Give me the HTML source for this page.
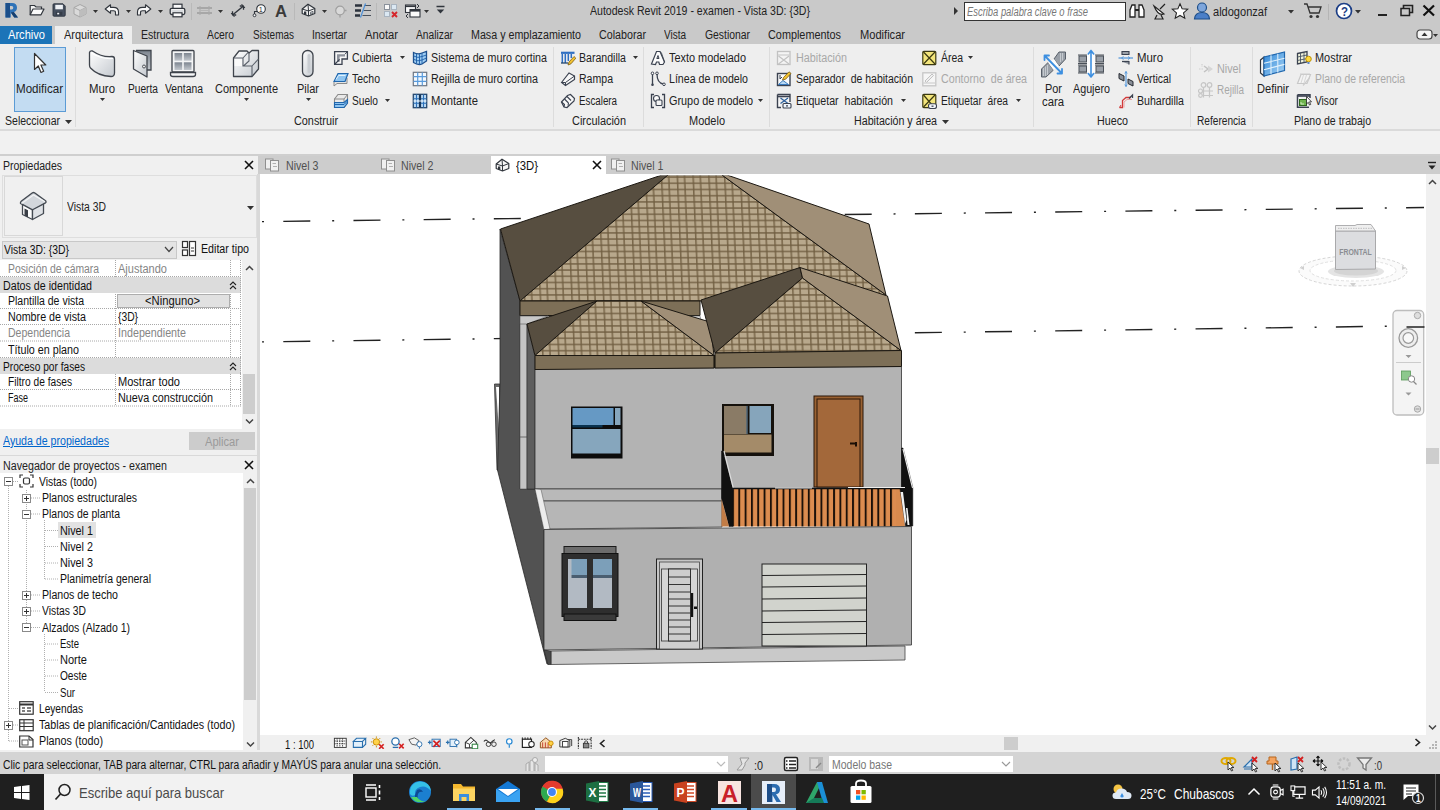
<!DOCTYPE html>
<html lang="es"><head><meta charset="utf-8"><title>Autodesk Revit 2019 - examen - Vista 3D: {3D}</title><style>
html,body{margin:0;padding:0}
body{width:1440px;height:810px;overflow:hidden;position:relative;background:#f0f0f0;font-family:"Liberation Sans",sans-serif;font-size:12px}
.t{position:absolute;white-space:pre;transform-origin:0 50%;display:block}
.r{position:absolute;box-sizing:border-box;display:block}
</style></head><body>
<div class="r" style="left:0px;top:0px;width:1440px;height:44px;background:#c9c9c9;"></div>
<div class="r" style="left:0px;top:44px;width:1440px;height:86px;background:#eeeeee;"></div>
<div class="r" style="left:0px;top:129px;width:1440px;height:2px;background:#dadada;"></div>
<div class="r" style="left:0px;top:131px;width:1440px;height:23px;background:#f1f1f1;"></div>
<div class="r" style="left:0px;top:154px;width:1440px;height:2px;background:#cfcfcf;"></div>
<span class="t" style="left:590px;top:3.6px;font-size:12px;line-height:14px;color:#222;transform:scaleX(0.8803);">Autodesk Revit 2019 - examen - Vista 3D: {3D}</span>
<div class="r" style="left:964px;top:2px;width:162px;height:19px;background:#fff;border:1px solid #333;"></div>
<span class="t" style="left:966.5px;top:4.6px;font-size:12px;line-height:14px;color:#777;transform:scaleX(0.7820);font-style:italic;">Escriba palabra clave o frase</span>
<span class="t" style="left:1213px;top:4.6px;font-size:12px;line-height:14px;color:#222;transform:scaleX(0.9197);">aldogonzaf</span>
<div class="r" style="left:0px;top:26px;width:52px;height:18px;background:#1c74b8;"></div>
<div class="r" style="left:55px;top:26px;width:77px;height:18px;background:#eeeeee;"></div>
<span class="t" style="left:8px;top:28.1px;font-size:12px;line-height:14px;color:#fff;transform:scaleX(0.9247);">Archivo</span>
<span class="t" style="left:64px;top:28.1px;font-size:12px;line-height:14px;color:#222;transform:scaleX(0.9120);">Arquitectura</span>
<span class="t" style="left:141px;top:28.1px;font-size:12px;line-height:14px;color:#222;transform:scaleX(0.8778);">Estructura</span>
<span class="t" style="left:207px;top:28.1px;font-size:12px;line-height:14px;color:#222;transform:scaleX(0.8613);">Acero</span>
<span class="t" style="left:253px;top:28.1px;font-size:12px;line-height:14px;color:#222;transform:scaleX(0.8309);">Sistemas</span>
<span class="t" style="left:312px;top:28.1px;font-size:12px;line-height:14px;color:#222;transform:scaleX(0.8604);">Insertar</span>
<span class="t" style="left:365px;top:28.1px;font-size:12px;line-height:14px;color:#222;transform:scaleX(0.9334);">Anotar</span>
<span class="t" style="left:416px;top:28.1px;font-size:12px;line-height:14px;color:#222;transform:scaleX(0.8535);">Analizar</span>
<span class="t" style="left:471px;top:28.1px;font-size:12px;line-height:14px;color:#222;transform:scaleX(0.8916);">Masa y emplazamiento</span>
<span class="t" style="left:599px;top:28.1px;font-size:12px;line-height:14px;color:#222;transform:scaleX(0.8920);">Colaborar</span>
<span class="t" style="left:664px;top:28.1px;font-size:12px;line-height:14px;color:#222;transform:scaleX(0.8314);">Vista</span>
<span class="t" style="left:705px;top:28.1px;font-size:12px;line-height:14px;color:#222;transform:scaleX(0.8650);">Gestionar</span>
<span class="t" style="left:768px;top:28.1px;font-size:12px;line-height:14px;color:#222;transform:scaleX(0.9046);">Complementos</span>
<span class="t" style="left:860px;top:28.1px;font-size:12px;line-height:14px;color:#222;transform:scaleX(0.9245);">Modificar</span>
<div class="r" style="left:13.5px;top:47px;width:52px;height:65px;background:#c3dcf2;border:1px solid #5b9bd5;"></div>
<span class="t" style="left:16px;top:81.6px;font-size:12px;line-height:14px;color:#222;transform:scaleX(0.9656);">Modificar</span>
<span class="t" style="left:89px;top:81.6px;font-size:12px;line-height:14px;color:#222;transform:scaleX(0.9511);">Muro</span>
<span class="t" style="left:128px;top:81.6px;font-size:12px;line-height:14px;color:#222;transform:scaleX(0.8486);">Puerta</span>
<span class="t" style="left:165px;top:81.6px;font-size:12px;line-height:14px;color:#222;transform:scaleX(0.8628);">Ventana</span>
<span class="t" style="left:215px;top:81.6px;font-size:12px;line-height:14px;color:#222;transform:scaleX(0.9169);">Componente</span>
<span class="t" style="left:297px;top:81.6px;font-size:12px;line-height:14px;color:#222;transform:scaleX(0.9165);">Pilar</span>
<span class="t" style="left:5px;top:114.1px;font-size:12px;line-height:14px;color:#222;transform:scaleX(0.8772);">Seleccionar</span>
<span class="t" style="left:294px;top:114.1px;font-size:12px;line-height:14px;color:#222;transform:scaleX(0.9039);">Construir</span>
<span class="t" style="left:572px;top:114.1px;font-size:12px;line-height:14px;color:#222;transform:scaleX(0.9098);">Circulación</span>
<span class="t" style="left:689px;top:114.1px;font-size:12px;line-height:14px;color:#222;transform:scaleX(0.9148);">Modelo</span>
<span class="t" style="left:854px;top:114.1px;font-size:12px;line-height:14px;color:#222;transform:scaleX(0.8888);">Habitación y área</span>
<span class="t" style="left:1097px;top:114.1px;font-size:12px;line-height:14px;color:#222;transform:scaleX(0.8937);">Hueco</span>
<span class="t" style="left:1197px;top:114.1px;font-size:12px;line-height:14px;color:#222;transform:scaleX(0.8444);">Referencia</span>
<span class="t" style="left:1294px;top:114.1px;font-size:12px;line-height:14px;color:#222;transform:scaleX(0.8811);">Plano de trabajo</span>
<span class="t" style="left:352px;top:50.6px;font-size:12px;line-height:14px;color:#222;transform:scaleX(0.8819);">Cubierta</span>
<span class="t" style="left:352px;top:72.1px;font-size:12px;line-height:14px;color:#222;transform:scaleX(0.8745);">Techo</span>
<span class="t" style="left:352px;top:93.6px;font-size:12px;line-height:14px;color:#222;transform:scaleX(0.8472);">Suelo</span>
<span class="t" style="left:431px;top:50.6px;font-size:12px;line-height:14px;color:#222;transform:scaleX(0.8920);">Sistema de muro cortina</span>
<span class="t" style="left:431px;top:72.1px;font-size:12px;line-height:14px;color:#222;transform:scaleX(0.8963);">Rejilla de muro cortina</span>
<span class="t" style="left:431px;top:93.6px;font-size:12px;line-height:14px;color:#222;transform:scaleX(0.9395);">Montante</span>
<span class="t" style="left:579px;top:50.6px;font-size:12px;line-height:14px;color:#222;transform:scaleX(0.8807);">Barandilla</span>
<span class="t" style="left:579px;top:72.1px;font-size:12px;line-height:14px;color:#222;transform:scaleX(0.8790);">Rampa</span>
<span class="t" style="left:579px;top:93.6px;font-size:12px;line-height:14px;color:#222;transform:scaleX(0.8140);">Escalera</span>
<span class="t" style="left:669px;top:50.6px;font-size:12px;line-height:14px;color:#222;transform:scaleX(0.9089);">Texto modelado</span>
<span class="t" style="left:669px;top:72.1px;font-size:12px;line-height:14px;color:#222;transform:scaleX(0.8837);">Línea de modelo</span>
<span class="t" style="left:669px;top:93.6px;font-size:12px;line-height:14px;color:#222;transform:scaleX(0.9060);">Grupo de modelo</span>
<span class="t" style="left:796px;top:72.1px;font-size:12px;line-height:14px;color:#222;transform:scaleX(0.8726);">Separador  de habitación</span>
<span class="t" style="left:796px;top:93.6px;font-size:12px;line-height:14px;color:#222;transform:scaleX(0.8867);">Etiquetar  habitación</span>
<span class="t" style="left:941px;top:50.6px;font-size:12px;line-height:14px;color:#222;transform:scaleX(0.8680);">Área</span>
<span class="t" style="left:941px;top:93.6px;font-size:12px;line-height:14px;color:#222;transform:scaleX(0.8512);">Etiquetar  área</span>
<span class="t" style="left:1137px;top:50.6px;font-size:12px;line-height:14px;color:#222;transform:scaleX(0.9511);">Muro</span>
<span class="t" style="left:1137px;top:72.1px;font-size:12px;line-height:14px;color:#222;transform:scaleX(0.8640);">Vertical</span>
<span class="t" style="left:1137px;top:93.6px;font-size:12px;line-height:14px;color:#222;transform:scaleX(0.8807);">Buhardilla</span>
<span class="t" style="left:1315px;top:50.6px;font-size:12px;line-height:14px;color:#222;transform:scaleX(0.9098);">Mostrar</span>
<span class="t" style="left:1315px;top:93.6px;font-size:12px;line-height:14px;color:#222;transform:scaleX(0.8480);">Visor</span>
<span class="t" style="left:796px;top:50.6px;font-size:12px;line-height:14px;color:#a8a8a8;transform:scaleX(0.8995);">Habitación</span>
<span class="t" style="left:941px;top:72.1px;font-size:12px;line-height:14px;color:#a8a8a8;transform:scaleX(0.8891);">Contorno  de área</span>
<span class="t" style="left:1217px;top:61.6px;font-size:12px;line-height:14px;color:#a8a8a8;transform:scaleX(0.8998);">Nivel</span>
<span class="t" style="left:1217px;top:83.1px;font-size:12px;line-height:14px;color:#a8a8a8;transform:scaleX(0.8263);">Rejilla</span>
<span class="t" style="left:1315px;top:72.1px;font-size:12px;line-height:14px;color:#a8a8a8;transform:scaleX(0.8649);">Plano de referencia</span>
<span class="t" style="left:1045px;top:81.6px;font-size:12px;line-height:14px;color:#222;transform:scaleX(0.9104);">Por</span>
<span class="t" style="left:1042px;top:94.6px;font-size:12px;line-height:14px;color:#222;transform:scaleX(0.9425);">cara</span>
<span class="t" style="left:1073px;top:81.6px;font-size:12px;line-height:14px;color:#222;transform:scaleX(0.8946);">Agujero</span>
<span class="t" style="left:1257px;top:81.6px;font-size:12px;line-height:14px;color:#222;transform:scaleX(0.9229);">Definir</span>
<div class="r" style="left:75px;top:47px;width:1px;height:80px;background:#dcdcdc;"></div>
<div class="r" style="left:553px;top:47px;width:1px;height:80px;background:#dcdcdc;"></div>
<div class="r" style="left:643px;top:47px;width:1px;height:80px;background:#dcdcdc;"></div>
<div class="r" style="left:769px;top:47px;width:1px;height:80px;background:#dcdcdc;"></div>
<div class="r" style="left:1033px;top:47px;width:1px;height:80px;background:#dcdcdc;"></div>
<div class="r" style="left:1190px;top:47px;width:1px;height:80px;background:#dcdcdc;"></div>
<div class="r" style="left:1252px;top:47px;width:1px;height:80px;background:#dcdcdc;"></div>
<svg class="r" style="left:399.5px;top:56.0px;" width="5" height="4" viewBox="0 0 5 4"><path d="M0 0 L5 0 L2.5 3 Z" fill="#333"/></svg>
<svg class="r" style="left:385.0px;top:99.0px;" width="5" height="4" viewBox="0 0 5 4"><path d="M0 0 L5 0 L2.5 3 Z" fill="#333"/></svg>
<svg class="r" style="left:633.0px;top:56.0px;" width="5" height="4" viewBox="0 0 5 4"><path d="M0 0 L5 0 L2.5 3 Z" fill="#333"/></svg>
<svg class="r" style="left:758.0px;top:99.0px;" width="5" height="4" viewBox="0 0 5 4"><path d="M0 0 L5 0 L2.5 3 Z" fill="#333"/></svg>
<svg class="r" style="left:901.0px;top:99.0px;" width="5" height="4" viewBox="0 0 5 4"><path d="M0 0 L5 0 L2.5 3 Z" fill="#333"/></svg>
<svg class="r" style="left:968.0px;top:56.0px;" width="5" height="4" viewBox="0 0 5 4"><path d="M0 0 L5 0 L2.5 3 Z" fill="#333"/></svg>
<svg class="r" style="left:1016.0px;top:99.0px;" width="5" height="4" viewBox="0 0 5 4"><path d="M0 0 L5 0 L2.5 3 Z" fill="#333"/></svg>
<svg class="r" style="left:64.5px;top:119.5px;" width="7" height="5" viewBox="0 0 7 5"><path d="M0 0 L7 0 L3.5 4 Z" fill="#333"/></svg>
<svg class="r" style="left:942.0px;top:119.5px;" width="7" height="5" viewBox="0 0 7 5"><path d="M0 0 L7 0 L3.5 4 Z" fill="#333"/></svg>
<svg class="r" style="left:99.5px;top:97.5px;" width="5" height="4" viewBox="0 0 5 4"><path d="M0 0 L5 0 L2.5 3 Z" fill="#333"/></svg>
<svg class="r" style="left:243.5px;top:97.5px;" width="5" height="4" viewBox="0 0 5 4"><path d="M0 0 L5 0 L2.5 3 Z" fill="#333"/></svg>
<svg class="r" style="left:305.5px;top:97.5px;" width="5" height="4" viewBox="0 0 5 4"><path d="M0 0 L5 0 L2.5 3 Z" fill="#333"/></svg>
<svg class="r" style="left:0px;top:0px;" width="1" height="1" viewBox="0 0 1 1"><defs><linearGradient id="gA" x1="0" y1="0" x2="1" y2="1"><stop offset="0" stop-color="#ffffff"/><stop offset="1" stop-color="#c4c9cf"/></linearGradient><linearGradient id="gB" x1="0" y1="0" x2="0" y2="1"><stop offset="0" stop-color="#7d8590"/><stop offset="1" stop-color="#c3c8ce"/></linearGradient><linearGradient id="gC" x1="0" y1="0" x2="1" y2="1"><stop offset="0" stop-color="#2f86d6"/><stop offset="1" stop-color="#a9d6f7"/></linearGradient></defs></svg>
<svg class="r" style="left:32px;top:52px;" width="16" height="24" viewBox="0 0 16 24"><path d="M2.500 1.500 L2.500 17.500 L6.300 14 L9 20.500 L11.700 19.300 L8.900 13 L13.800 13 Z" fill="#fff" stroke="#333" stroke-width="1.200" stroke-linejoin="round"/></svg>
<svg class="r" style="left:88px;top:49px;" width="28" height="29" viewBox="0 0 28 29"><path d="M1.500 3.500 Q2 1.500 4.500 2 Q14 8.500 24 7.500 Q26.500 7.500 26.500 10 V24 Q26.500 27.500 23 27.500 Q10 27 2.500 19 Q1.500 18 1.500 16 Z" fill="url(#gA)" stroke="#3f444c" stroke-width="1.300"/><path d="M3.500 4 Q14 10.500 25 9.500" fill="none" stroke="#fff" stroke-width="1.200"/></svg>
<svg class="r" style="left:132px;top:49px;" width="21" height="29" viewBox="0 0 21 29"><path d="M4 1.500 H19 V21 H15" fill="url(#gB)" stroke="#3f444c" stroke-width="1.300"/><path d="M1.500 1.500 L15 7 V28 L1.500 20 Z" fill="url(#gA)" stroke="#3f444c" stroke-width="1.300" stroke-linejoin="round"/><circle cx="12" cy="17.500" r="1.500" fill="#e8e8e8" stroke="#3f444c" stroke-width=".9"/></svg>
<svg class="r" style="left:169px;top:49px;" width="28" height="29" viewBox="0 0 28 29"><rect x="3" y="1.500" width="22" height="21.500" rx="1" fill="#f4f5f6" stroke="#3f444c" stroke-width="1.300"/><rect x="5.500" y="4" width="7.700" height="7.700" fill="url(#gB)"/><rect x="14.800" y="4" width="7.700" height="7.700" fill="url(#gB)"/><rect x="5.500" y="13.300" width="7.700" height="7.700" fill="url(#gB)"/><rect x="14.800" y="13.300" width="7.700" height="7.700" fill="url(#gB)"/><path d="M1.500 23.500 H26.500 V25.500 Q26.500 27.500 24 27.500 H4 Q1.500 27.500 1.500 25.500 Z" fill="#f4f5f6" stroke="#3f444c" stroke-width="1.300"/></svg>
<svg class="r" style="left:232px;top:49px;" width="28" height="29" viewBox="0 0 28 29"><path d="M1.500 9 L7 2 H15 L17 4 L20 1.500 H26.500 V20 L20 27.500 H1.500 Z" fill="url(#gA)" stroke="#3f444c" stroke-width="1.300" stroke-linejoin="round"/><path d="M1.500 9 H11 V17 H20 V27 M11 9 L16 3.500 M20 17 L26.500 10 M17 4 V12 L11.500 17" fill="none" stroke="#5a606a" stroke-width="1.100"/><rect x="2.700" y="10.200" width="7.300" height="6.800" fill="#fafafa"/></svg>
<svg class="r" style="left:301px;top:49px;" width="14" height="29" viewBox="0 0 14 29"><rect x="1.500" y="1.500" width="10.500" height="26" rx="5" fill="url(#gA)" stroke="#3f444c" stroke-width="1.300"/><rect x="6.500" y="5" width="3" height="19" rx="1.500" fill="#c9cdd2"/></svg>
<svg class="r" style="left:1040px;top:50px;" width="28" height="28" viewBox="0 0 28 28"><path d="M14 9 L19 2 H25.500 V9 L19 16 Z" fill="#9aa0a8" stroke="#59606a" stroke-width="1"/><path d="M1.500 19 L8 12.500 L13.500 20 L6 27 H1.500 Z" fill="#9aa0a8" stroke="#59606a" stroke-width="1"/><path d="M8 12.500 L14 9 L19 16 L13.500 20 Z" fill="#fdfdfd"/><path d="M20.500 3 V12 M22.500 3 V10.500 M3.500 18 V26 M5.500 16.500 V26 M7.500 15 V25" stroke="#d0d4d9" stroke-width=".8"/><path d="M4.500 5.500 L22 23.500 M4.500 5.500 H9 M4.500 5.500 V10 M22 23.500 H17.500 M22 23.500 V19" stroke="#3d8fe0" stroke-width="1.800" fill="none" stroke-linecap="round"/></svg>
<svg class="r" style="left:1076px;top:49px;" width="30" height="30" viewBox="0 0 30 30"><rect x="10" y="5" width="10" height="19" fill="#fdfdfd"/><g fill="#9aa0a8" stroke="#4a5059" stroke-width="1"><rect x="3" y="7" width="7.500" height="6"/><rect x="20" y="7" width="7.500" height="6"/><rect x="3" y="17" width="7.500" height="6"/><rect x="20" y="17" width="7.500" height="6"/></g><path d="M2 6 H11 M2 14.500 H11 M2 16 H11 M2 24 H11 M19 6 H28 M19 14.500 H28 M19 16 H28 M19 24 H28" stroke="#4a5059" stroke-width="1"/><path d="M15 1.500 V28 M15 1.500 L12.300 5 M15 1.500 L17.700 5 M15 28 L12.300 24.500 M15 28 L17.700 24.500" stroke="#3d8fe0" stroke-width="1.600" fill="none" stroke-linecap="round"/></svg>
<svg class="r" style="left:1259px;top:50px;" width="28" height="28" viewBox="0 0 28 28"><path d="M1.500 10 L5 7 V26 L1.500 23 Z" fill="#f4f4f4" stroke="#30353c" stroke-width="1.200"/><path d="M5 7 L25.500 2 V20.500 L5 26 Z" fill="url(#gC)" stroke="#1f66ad" stroke-width="1.200"/><path d="M12 5.300 V24.200 M18.800 3.700 V22.400 M5 13.300 L25.500 8.200 M5 19.700 L25.500 14.400" stroke="#dff0fc" stroke-width="1.100" fill="none"/></svg>
<svg class="r" style="left:333px;top:49.5px;" width="16" height="16" viewBox="0 0 16 16"><path d="M1.600 1.600 H14.400 V9 H9 V14.400 H1.600 Z" fill="#f6f6f6" stroke="#3b4250" stroke-width="1.300"/><path d="M4 4.200 H12 V6.600 H6.600 V12 H4 Z" fill="#8d929c"/><path d="M2 14 L6.600 9.400" stroke="#3b4250" stroke-width="1.200"/><path d="M12 4.200 L14.400 1.600" stroke="#3b4250" stroke-width="1"/></svg>
<svg class="r" style="left:333px;top:71px;" width="16" height="16" viewBox="0 0 16 16"><path d="M1 11 V15 L4 12.500 H14 V7" fill="#e4e4e4" stroke="#8a8a8a" stroke-width="1"/><path d="M1 10.500 L5 2.500 H15 L12 10.500 Z" fill="#8ec4f0" stroke="#1f66ad" stroke-width="1.200"/><path d="M3 8.500 L5.500 4.500 H12.500" stroke="#dff0fc" stroke-width="1" fill="none"/></svg>
<svg class="r" style="left:333px;top:92.5px;" width="16" height="16" viewBox="0 0 16 16"><path d="M1.500 6 L5 1.500 H14.500 V10 L11 14.500 H1.500 Z" fill="#e9e9e9" stroke="#8a8a8a" stroke-width="1.100"/><path d="M1.500 6 H11 V14.500 M11 6 L14.500 1.500" fill="none" stroke="#8a8a8a" stroke-width="1"/><path d="M1.500 9.500 H11 L14.500 6.500 V10 L11 14.500 H1.500 Z" fill="#8ec4f0" stroke="#1f66ad" stroke-width="1.100"/><path d="M1.500 11.500 H11 L14.500 8" fill="none" stroke="#1f66ad" stroke-width="1"/></svg>
<svg class="r" style="left:412px;top:49.5px;" width="16" height="16" viewBox="0 0 16 16"><path d="M1.500 2.500 Q6 5 10 3 L14.500 1.500 V11 L10 14 Q6 15.500 1.500 12.500 Z" fill="#9fcdf2" stroke="#1d4f8c" stroke-width="1.300"/><path d="M4.500 3.800 V13.700 M7.500 4.200 V14.500 M10 3 V14 M1.500 6 Q6 8.500 10 6.500 L14.500 5 M1.500 9.300 Q6 12 10 10 L14.500 8" stroke="#1d5fa8" stroke-width=".9" fill="none"/></svg>
<svg class="r" style="left:412px;top:71px;" width="16" height="16" viewBox="0 0 16 16"><rect x="1.300" y="1.300" width="13.400" height="13.400" fill="#f3f8fd" stroke="#6d7580" stroke-width="1.200"/><path d="M5.700 1.500 V14.500 M10.300 1.500 V14.500 M1.500 5.700 H14.500 M1.500 10.300 H14.500" stroke="#5a9bdc" stroke-width="1.200"/></svg>
<svg class="r" style="left:412px;top:92.5px;" width="16" height="16" viewBox="0 0 16 16"><rect x="1.300" y="1.300" width="13.400" height="13.400" fill="#b9d9f4" stroke="#26486e" stroke-width="1.300"/><path d="M1.500 5.700 H14.500 M1.500 10.300 H14.500 M4.500 1.500 V14.500 M11.500 1.500 V14.500" stroke="#2a6fb8" stroke-width="1.100"/><path d="M8 1.500 V14.500" stroke="#17365a" stroke-width="2.200"/><path d="M1.500 8 H14.500" stroke="#eaf4fc" stroke-width="1"/></svg>
<svg class="r" style="left:560px;top:49.5px;" width="16" height="16" viewBox="0 0 16 16"><path d="M1 2.800 H14.500" stroke="#2f6fc2" stroke-width="2.200"/><path d="M2.300 4 V13 M5.300 4 V13 M8.300 4 V11 M11.300 4 V8" stroke="#2f6fc2" stroke-width="1.500"/><path d="M1 13 H8" stroke="#26486e" stroke-width="1.300"/><path d="M8 15 L9 12 L14 6.500 L15.800 8.200 L11 13.800 Z" fill="#f2c230" stroke="#7a5a10" stroke-width=".8"/></svg>
<svg class="r" style="left:560px;top:71px;" width="16" height="16" viewBox="0 0 16 16"><path d="M1.500 11.500 L9 2 L14.500 5 V8.500 L5.500 14.500 Z" fill="#f8f8f8" stroke="#3b4250" stroke-width="1.200"/><path d="M14.500 5 L5.500 11.500 V14.500 M5.500 11.500 L1.500 11.500" fill="none" stroke="#3b4250" stroke-width="1"/></svg>
<svg class="r" style="left:560px;top:92.5px;" width="16" height="16" viewBox="0 0 16 16"><path d="M1.500 9 L7.500 2.500 L10.500 1.500 L14.500 5.500 L14 8 L7 14.500 L4 14 Z" fill="#f8f8f8" stroke="#3b4250" stroke-width="1.200"/><path d="M4.500 6 L8.500 10 M7 3.500 L11 7.500 M4 14 L4.500 11.500 L1.500 9 M8.500 10 L8 12.500" fill="none" stroke="#3b4250" stroke-width="1.100"/></svg>
<svg class="r" style="left:650px;top:49.5px;" width="16" height="16" viewBox="0 0 16 16"><path d="M1.500 14 L6.500 1.500 H10 L14.500 12 L13 14.500 H9.500 L8.800 12 H6.500 L5.500 14.500 Z" fill="#fbfbfb" stroke="#3b4250" stroke-width="1.200"/><path d="M6.800 8.500 H9 L8 5.500 Z" fill="#eee" stroke="#3b4250" stroke-width="1"/><path d="M10 1.500 L11.500 3 L14.500 12" fill="none" stroke="#3b4250" stroke-width=".8"/></svg>
<svg class="r" style="left:650px;top:71px;" width="16" height="16" viewBox="0 0 16 16"><path d="M2.500 3 V13" stroke="#3b4250" stroke-width="1.300"/><circle cx="2.500" cy="2.300" r="1.300" fill="#fff" stroke="#3b4250"/><circle cx="2.500" cy="13.700" r="1.300" fill="#3b4250"/><path d="M7 3 Q7 12 13.500 13" fill="none" stroke="#3b4250" stroke-width="1.300"/><circle cx="7" cy="2.300" r="1.300" fill="#fff" stroke="#3b4250"/><circle cx="14" cy="13.300" r="1.300" fill="#fff" stroke="#3b4250"/></svg>
<svg class="r" style="left:650px;top:92.5px;" width="16" height="16" viewBox="0 0 16 16"><path d="M4 1.500 H1.500 V14.500 H4 M12 1.500 H14.500 V14.500 H12" fill="none" stroke="#3b4250" stroke-width="1.300"/><circle cx="6.500" cy="5.500" r="3" fill="#fbfbfb" stroke="#3b4250" stroke-width="1.100"/><rect x="6" y="7" width="6" height="5.500" rx="1" fill="#f4f4f4" stroke="#3b4250" stroke-width="1.100"/></svg>
<svg class="r" style="left:776px;top:49.5px;" width="16" height="16" viewBox="0 0 16 16"><rect x="1.500" y="1.500" width="12.500" height="13" fill="#f4f4f4" stroke="#c2c2c2" stroke-width="1.300"/><path d="M2 5 H14" stroke="#cfcfcf" stroke-width="1.300"/><path d="M2.500 6 L13 14 M13 6 L2.500 14" stroke="#c2c2c2" stroke-width="1.200"/></svg>
<svg class="r" style="left:776px;top:71px;" width="16" height="16" viewBox="0 0 16 16"><rect x="1.500" y="2.500" width="12.500" height="12" fill="#fbfbfb" stroke="#3b4250" stroke-width="1.400"/><path d="M2.500 13.500 L7 9.500 L12.500 13.500 Z" fill="#b9d9f4" stroke="#2a6fb8" stroke-width=".9"/><path d="M4 4 V8 L6 6" fill="none" stroke="#3b4250" stroke-width="1"/><path d="M6.500 9 L7.500 6.500 L13 .800 L15 2.500 L9.500 8.300 Z" fill="#f2c230" stroke="#7a5a10" stroke-width=".8"/></svg>
<svg class="r" style="left:776px;top:92.5px;" width="16" height="16" viewBox="0 0 16 16"><path d="M1.500 1.500 H14 V9 M1.500 1.500 V14.500 H5" fill="#fbfbfb" stroke="#3b4250" stroke-width="1.400"/><path d="M2 3.500 H14" stroke="#3b4250" stroke-width="1.600"/><path d="M4.500 5 L12 10.500 M12 5 L4.500 10.500" stroke="#2a5f9c" stroke-width="1.200"/><rect x="7" y="10.500" width="8" height="4.500" rx="1" fill="#eef5fc" stroke="#3b4250" stroke-width="1.100"/><path d="M10 12.800 H12" stroke="#3b4250" stroke-width="1.200"/></svg>
<svg class="r" style="left:921px;top:49.5px;" width="16" height="16" viewBox="0 0 16 16"><rect x="1.800" y="1.300" width="13" height="13.400" rx="1" fill="#f4e67c" stroke="#3c3a12" stroke-width="1.200"/><path d="M2.500 2 L14 14 M14 2 L2.500 14" stroke="#3c3a12" stroke-width="1.200"/></svg>
<svg class="r" style="left:921px;top:71px;" width="16" height="16" viewBox="0 0 16 16"><rect x="1.800" y="1.800" width="13" height="13" fill="#f6f6f6" stroke="#c6c6c6" stroke-width="1.300"/><path d="M4 10 L11 3 L12.500 4.500 L5.500 11.500 Z" fill="#efefef" stroke="#c2c2c2" stroke-width="1"/><path d="M2 12 H14.500" stroke="#d0d0d0" stroke-width="1.200"/></svg>
<svg class="r" style="left:921px;top:92.5px;" width="16" height="16" viewBox="0 0 16 16"><rect x="1.800" y="1.300" width="13" height="13.400" rx="1" fill="#f4e67c" stroke="#3c3a12" stroke-width="1.200"/><path d="M2.500 2 L12 13 M14 2 L2.500 14" stroke="#3c3a12" stroke-width="1.200"/><rect x="7.500" y="10.800" width="8" height="4.700" rx="2" fill="#f4f7fb" stroke="#3b4250" stroke-width="1.100"/><path d="M10.500 13.200 H12.500" stroke="#3b4250" stroke-width="1.300"/></svg>
<svg class="r" style="left:1118px;top:49.5px;" width="16" height="16" viewBox="0 0 16 16"><path d="M4 1.500 H11 V4.500 H4 Z M4 11.500 H11 V14.500" fill="#9aa0a8" stroke="#3b4250" stroke-width="1.100"/><path d="M0.500 8 H15" stroke="#5a9bdc" stroke-width="1.300"/><path d="M3.500 8 L5.500 6.500 M3.500 8 L5.500 9.500 M12 8 L10 6.500 M12 8 L10 9.500" stroke="#5a9bdc" stroke-width="1"/><path d="M4 11.500 H11" stroke="#3b4250" stroke-width="1.300"/></svg>
<svg class="r" style="left:1118px;top:71px;" width="16" height="16" viewBox="0 0 16 16"><path d="M1 2.500 L6 5 V10 L1 7.500 Z M10 8 L15 10.500 V15 L10 12.500 Z" fill="#8a9099" stroke="#22272e" stroke-width="1"/><path d="M8 .500 V15.500" stroke="#5a9bdc" stroke-width="1.200"/><path d="M8 .500 L6.800 2.500 M8 .500 L9.200 2.500 M8 15.500 L6.800 13.500 M8 15.500 L9.200 13.500" stroke="#5a9bdc" stroke-width="1"/></svg>
<svg class="r" style="left:1118px;top:92.5px;" width="16" height="16" viewBox="0 0 16 16"><path d="M1.500 14.500 H4.500 V7.500 L8 4.500 H13" fill="none" stroke="#d23a3a" stroke-width="1.300"/><path d="M3 12 L1.500 14.500" stroke="#d23a3a" stroke-width="1"/><path d="M11 5.500 L14.500 2 V5" fill="none" stroke="#3b4250" stroke-width="1.300"/><path d="M6 14.500 V9 L9 6.500 H14" fill="none" stroke="#e9a0a0" stroke-width="1"/></svg>
<svg class="r" style="left:1198px;top:60.5px;" width="16" height="16" viewBox="0 0 16 16"><path d="M1 8 H6 M4 3 V6" stroke="#cfcfcf" stroke-width="1.200" stroke-dasharray="1.500 1"/><path d="M6 5 L10 8 L6 11" fill="none" stroke="#c2c2c2" stroke-width="1.500"/><path d="M10 4.500 L15 8 L10 11.500 Z" fill="#d6d6d6"/></svg>
<svg class="r" style="left:1198px;top:82px;" width="16" height="16" viewBox="0 0 16 16"><circle cx="5.500" cy="3" r="2.300" fill="none" stroke="#c6c6c6" stroke-width="1.200"/><circle cx="11.500" cy="3" r="2.300" fill="none" stroke="#c6c6c6" stroke-width="1.200"/><circle cx="2.500" cy="9" r="2" fill="none" stroke="#c6c6c6" stroke-width="1.200"/><circle cx="2.500" cy="13.500" r="1.800" fill="none" stroke="#c6c6c6" stroke-width="1.200"/><path d="M5.500 5.500 V15.500 M11.500 5.500 V15.500 M4.500 9 H15 M4.500 13.500 H15" stroke="#c6c6c6" stroke-width="1.200"/></svg>
<svg class="r" style="left:1296px;top:49.5px;" width="16" height="16" viewBox="0 0 16 16"><path d="M1.500 3.500 L11 1.500 V12 L1.500 14 Z" fill="#f0f2dc" stroke="#3b4250" stroke-width="1.300"/><path d="M4.500 3 V13.300 M8 2.200 V12.600 M1.500 7 L11 5 M1.500 10.500 L11 8.500" stroke="#4a5563" stroke-width=".9"/><circle cx="12.500" cy="9" r="2.800" fill="#ffd83a" stroke="#b88a00" stroke-width=".9"/><path d="M11.500 12 H13.500 V14 H11.500 Z" fill="#5a84c4"/></svg>
<svg class="r" style="left:1296px;top:71px;" width="16" height="16" viewBox="0 0 16 16"><path d="M1.500 12.500 L5 3.500 H14.500 L11 12.500 Z" fill="#f4f4f4" stroke="#c8c8c8" stroke-width="1.200"/><path d="M4 3 H14 M7 14.500 L13.500 7" stroke="#cdcdcd" stroke-width="1.200"/><path d="M7.500 4 L5 12 M10.500 4 L8 12" stroke="#d8d8d8" stroke-width="1"/></svg>
<svg class="r" style="left:1296px;top:92.5px;" width="16" height="16" viewBox="0 0 16 16"><path d="M1.500 1.800 H14 V5 M1.500 1.800 V14.300 H13" fill="#fbfbfb" stroke="#3b4250" stroke-width="1.500"/><path d="M2 3 H14" stroke="#3b4250" stroke-width="1.600"/><rect x="3.500" y="6.500" width="7" height="6" fill="#6fb44f" stroke="#2f6a1f" stroke-width="1"/><path d="M5 9 V11 H8" fill="none" stroke="#cfeabf" stroke-width="1"/><path d="M10.500 3.500 V11 L12.300 9.300 L13.500 12 L14.700 11.500 L13.500 8.800 H15.500 Z" fill="#fff" stroke="#222" stroke-width=".8"/></svg>
<svg class="r" style="left:4px;top:2px;" width="15" height="16" viewBox="0 0 15 16"><path d="M1.500 1 H8 Q13 1 13 5.800 Q13 9.300 9.800 10 L14 15.500 H10.200 L6.800 10.500 V15.500 H1.500 Z M6 4 V7.500 H7.800 Q9.300 7.500 9.300 5.700 Q9.300 4 7.800 4 Z" fill="#2f73b8"/><path d="M1.500 1 H6 V15.500 H1.500 Z" fill="#1b4e8a"/><path d="M6.800 10.500 L9.800 10 L14 15.500 H10.200 Z" fill="#17406f"/></svg>
<svg class="r" style="left:29px;top:4px;" width="16" height="12" viewBox="0 0 16 12"><path d="M1.200 10.800 V1.500 H5.500 L7 3 H12.500 V5" fill="#f2f2f2" stroke="#30353c" stroke-width="1.200"/><path d="M1.200 10.800 L4 5 H15 L12 10.800 Z" fill="#fafafa" stroke="#30353c" stroke-width="1.200" stroke-linejoin="round"/></svg>
<svg class="r" style="left:52px;top:3px;" width="14" height="14" viewBox="0 0 14 14"><path d="M1 1.800 Q1 .800 2 .800 H11 L13.200 3 V12.200 Q13.200 13.200 12.200 13.200 H2 Q1 13.200 1 12.200 Z" fill="#46505f" stroke="#2b323d" stroke-width=".9"/><rect x="3.300" y="1.800" width="7.600" height="4.500" fill="#eef1f5"/><rect x="3.800" y="8.800" width="6.500" height="3.600" fill="#353d49"/><rect x="5.200" y="9.800" width="2" height="1.600" fill="#eef1f5"/></svg>
<svg class="r" style="left:72px;top:3px;" width="16" height="15" viewBox="0 0 16 15"><path d="M2 4.500 L8 1.500 L14 4.500 V11 L8 14 L2 11 Z" fill="#dadada" stroke="#a6a6a6" stroke-width="1"/><path d="M2 4.500 L8 7.500 L14 4.500 M8 7.500 V14" fill="none" stroke="#a6a6a6"/><path d="M8 7.500 L14 4.500 V11 L8 14 Z" fill="#bdbdbd"/></svg>
<svg class="r" style="left:104px;top:4px;" width="16" height="12" viewBox="0 0 16 12"><path d="M1.200 5 L6.500 .800 V3.300 H9.500 Q14.500 3.300 14.500 8 V11 H11.500 V8.500 Q11.500 6.700 9.500 6.700 H6.500 V9.200 Z" fill="#fafafa" stroke="#30353c" stroke-width="1.150" stroke-linejoin="round"/></svg>
<svg class="r" style="left:136px;top:4px;" width="16" height="12" viewBox="0 0 16 12"><path d="M14.800 5 L9.500 .800 V3.300 H6.500 Q1.500 3.300 1.500 8 V11 H4.500 V8.500 Q4.500 6.700 6.500 6.700 H9.500 V9.200 Z" fill="#fafafa" stroke="#30353c" stroke-width="1.150" stroke-linejoin="round"/></svg>
<svg class="r" style="left:169px;top:3px;" width="17" height="15" viewBox="0 0 17 15"><rect x="4" y="1.200" width="9" height="4.500" fill="#fafafa" stroke="#30353c" stroke-width="1.200"/><rect x="1.200" y="5.300" width="14.600" height="6.200" rx="1.500" fill="#f2f2f2" stroke="#30353c" stroke-width="1.300"/><path d="M2.500 8 H14.500" stroke="#c9cdd3" stroke-width="1.200"/><rect x="4" y="9.800" width="9" height="4" fill="#fafafa" stroke="#30353c" stroke-width="1.200"/></svg>
<svg class="r" style="left:196px;top:5px;" width="17" height="11" viewBox="0 0 17 11"><path d="M1 3 H16 M1 8 H16" stroke="#9c9c9c" stroke-width="1.300"/><path d="M4 1 V10 M13 1 V10" stroke="#a9a9a9" stroke-width="1.100"/><path d="M4 5.500 H13" stroke="#b5b5b5" stroke-width="1"/></svg>
<svg class="r" style="left:230px;top:3px;" width="16" height="15" viewBox="0 0 16 15"><path d="M2.500 12 L13.500 3" stroke="#30353c" stroke-width="1.400"/><path d="M2.500 12 V8.300 M2.500 12 H6.200 M13.500 3 H9.800 M13.500 3 V6.700" stroke="#30353c" stroke-width="1.300" fill="none"/><path d="M1 10 L4.500 14 M11.500 1 L15 5" stroke="#30353c" stroke-width="1"/></svg>
<svg class="r" style="left:251px;top:3px;" width="16" height="15" viewBox="0 0 16 15"><circle cx="10" cy="6" r="4.300" fill="#fafafa" stroke="#30353c" stroke-width="1.100"/><path d="M6.300 8.500 L3.500 8.500 V11" fill="none" stroke="#30353c" stroke-width="1.100"/><circle cx="3.500" cy="12.300" r="1.400" fill="#fafafa" stroke="#30353c" stroke-width="1"/></svg>
<span class="t" style="left:259.2px;top:5.0px;font-size:7px;line-height:9px;color:#222;transform:scaleX(0.9248);">1</span>
<span class="t" style="left:275px;top:2.2px;font-size:17px;line-height:19px;color:#3a3a3a;transform:scaleX(0.9774);font-weight:bold;">A</span>
<svg class="r" style="left:301px;top:3px;" width="15" height="14" viewBox="0 0 15 14"><path d="M1.200 6 L7 1.200 L13.800 5.500 V10.500 L7.500 13 L1.200 10.500 Z" fill="#f2f2f2" stroke="#30353c" stroke-width="1.200" stroke-linejoin="round"/><path d="M1.200 6 L7.500 8 L13.800 5.500 M7.500 8 V13 M7 1.200 L7.500 8" fill="none" stroke="#30353c" stroke-width="1"/><rect x="3" y="8.500" width="2.300" height="3.300" fill="#30353c"/><path d="M9.500 9.300 L12 8.300 V10.300 L9.500 11.300 Z" fill="#c8ccd2" stroke="#30353c" stroke-width=".6"/></svg>
<svg class="r" style="left:334px;top:5px;" width="13" height="13" viewBox="0 0 13 13"><circle cx="6" cy="5.500" r="4.300" fill="#d9d9d9" stroke="#a0a0a0" stroke-width="1.200"/><path d="M6 10 V12.500 M10.300 5.500 H12.500" stroke="#a0a0a0" stroke-width="1.300"/></svg>
<svg class="r" style="left:354px;top:3px;" width="18" height="15" viewBox="0 0 18 15"><path d="M1 2.500 H8 M1 7.500 H7 M1 12.500 H6" stroke="#2b323d" stroke-width="2.400"/><path d="M10.500 2.500 H17 M9.500 7.500 H17 M8.500 12.500 H17" stroke="#4a515c" stroke-width="1"/><path d="M11.500 .500 L6.500 14.500" stroke="#4a8fd8" stroke-width="1.200"/></svg>
<svg class="r" style="left:383px;top:3px;" width="16" height="15" viewBox="0 0 16 15"><rect x="1.500" y="1.500" width="5" height="5" fill="#fafafa" stroke="#8a919b" stroke-width="1"/><rect x="8.500" y="1.500" width="5" height="5" fill="#dbe8f3" stroke="#a9b4c0" stroke-width="1"/><rect x="1.500" y="8.500" width="5" height="5" fill="#dbe8f3" stroke="#a9b4c0" stroke-width="1"/><path d="M9 9 L14 14 M14 9 L9 14" stroke="#d6262b" stroke-width="1.900"/></svg>
<svg class="r" style="left:404px;top:3px;" width="17" height="15" viewBox="0 0 17 15"><rect x="1.500" y="2" width="10" height="7.500" fill="#fafafa" stroke="#30353c" stroke-width="1.100"/><path d="M1.500 3.300 H11.500" stroke="#30353c" stroke-width="1.600"/><rect x="6" y="6.500" width="10" height="7.500" fill="#fafafa" stroke="#30353c" stroke-width="1.100"/><path d="M6 7.800 H16" stroke="#30353c" stroke-width="1.600"/><path d="M13 1 L15 3 L13 5 M4 11 L2 13 L4 15" fill="none" stroke="#30353c" stroke-width="1"/></svg>
<svg class="r" style="left:93.0px;top:9.5px;" width="5" height="4" viewBox="0 0 5 4"><path d="M0 0 L5 0 L2.5 3 Z" fill="#333"/></svg>
<svg class="r" style="left:125.5px;top:9.5px;" width="5" height="4" viewBox="0 0 5 4"><path d="M0 0 L5 0 L2.5 3 Z" fill="#333"/></svg>
<svg class="r" style="left:157.5px;top:9.5px;" width="5" height="4" viewBox="0 0 5 4"><path d="M0 0 L5 0 L2.5 3 Z" fill="#333"/></svg>
<svg class="r" style="left:218.0px;top:9.5px;" width="5" height="4" viewBox="0 0 5 4"><path d="M0 0 L5 0 L2.5 3 Z" fill="#333"/></svg>
<svg class="r" style="left:322.0px;top:9.5px;" width="5" height="4" viewBox="0 0 5 4"><path d="M0 0 L5 0 L2.5 3 Z" fill="#333"/></svg>
<svg class="r" style="left:423.5px;top:9.5px;" width="5" height="4" viewBox="0 0 5 4"><path d="M0 0 L5 0 L2.5 3 Z" fill="#333"/></svg>
<svg class="r" style="left:436px;top:5px;" width="9" height="10" viewBox="0 0 9 10"><path d="M.500 1.500 H8.500" stroke="#30353c" stroke-width="1.500"/><path d="M.800 4.500 H8.200 L4.500 8.500 Z" fill="#30353c"/></svg>
<div class="r" style="left:191px;top:3px;width:1px;height:17px;background:#b9b9b9;"></div>
<div class="r" style="left:294px;top:3px;width:1px;height:17px;background:#b9b9b9;"></div>
<div class="r" style="left:376px;top:3px;width:1px;height:17px;background:#b9b9b9;"></div>
<svg class="r" style="left:953px;top:6px;" width="6" height="10" viewBox="0 0 6 10"><path d="M1 1 L5 5 L1 9 Z" fill="#333"/></svg>
<svg class="r" style="left:1127px;top:2px;" width="20" height="18" viewBox="0 0 20 18"><path d="M3 15 V8 L5 3 H8 V15 Z M17 15 V8 L15 3 H12 V15 Z" fill="#fff" stroke="#222" stroke-width="1.300"/><path d="M8 8 H12" stroke="#222" stroke-width="2"/></svg>
<svg class="r" style="left:1151px;top:2px;" width="18" height="18" viewBox="0 0 18 18"><path d="M3 4 L13 12 Q7 14 3 4 Z" fill="#fff" stroke="#222" stroke-width="1.200"/><path d="M9 7 L14 2 M6 13 L4 17 H12 L10 13" stroke="#222" stroke-width="1.200" fill="none"/></svg>
<svg class="r" style="left:1171px;top:2px;" width="18" height="18" viewBox="0 0 18 18"><path transform="scale(.9)" d="M10 2 L12.400 7.600 L18.500 8.100 L13.900 12.100 L15.300 18 L10 14.900 L4.700 18 L6.100 12.100 L1.500 8.100 L7.600 7.600 Z" fill="#fff" stroke="#222" stroke-width="1.200"/></svg>
<svg class="r" style="left:1193px;top:1px;" width="18" height="20" viewBox="0 0 18 20"><circle cx="9" cy="6.500" r="4.500" fill="#7ea6dc" stroke="#1d4e89" stroke-width="1.200"/><path d="M1.500 18 Q2 11.500 9 11.500 Q16 11.500 16.500 18 Z" fill="#4a7fc8" stroke="#1d4e89" stroke-width="1.200"/></svg>
<svg class="r" style="left:1288.0px;top:9.5px;" width="6.0" height="4.5" viewBox="0 0 6.0 4.5"><path d="M0 0 L6.0 0 L3.0 3.5 Z" fill="#333"/></svg>
<svg class="r" style="left:1303px;top:2px;" width="20" height="18" viewBox="0 0 20 18"><path d="M1 2 H4 L7 11 H16 L18 5 H5.500" fill="none" stroke="#333" stroke-width="1.300"/><circle cx="8" cy="14.500" r="1.600" fill="#333"/><circle cx="14.500" cy="14.500" r="1.600" fill="#333"/></svg>
<svg class="r" style="left:1334px;top:1px;" width="20" height="20" viewBox="0 0 20 20"><circle cx="10" cy="10" r="7.500" fill="#fff" stroke="#1d3f86" stroke-width="1.700"/></svg>
<span class="t" style="left:1340.5px;top:3.6px;font-size:13px;line-height:15px;color:#1d3f86;transform:scaleX(0.8816);font-weight:bold;">?</span>
<svg class="r" style="left:1355.0px;top:9.5px;" width="6.0" height="4.5" viewBox="0 0 6.0 4.5"><path d="M0 0 L6.0 0 L3.0 3.5 Z" fill="#333"/></svg>
<div class="r" style="left:1378px;top:14px;width:9px;height:2px;background:#222;"></div>
<svg class="r" style="left:1400px;top:4px;" width="14" height="13" viewBox="0 0 14 13"><rect x="1" y="4.500" width="8.500" height="7" fill="none" stroke="#222" stroke-width="1.500"/><path d="M3.500 4.500 V1.500 H12.500 V8.500 H9.500" fill="none" stroke="#222" stroke-width="1.600"/></svg>
<svg class="r" style="left:1422px;top:4px;" width="14" height="13" viewBox="0 0 14 13"><path d="M1.500 1.500 L12 11.500 M12 1.500 L1.500 11.500" stroke="#111" stroke-width="2.200"/></svg>
<svg class="r" style="left:1416px;top:29px;" width="17" height="11" viewBox="0 0 17 11"><rect x="1" y="1" width="15" height="9" rx="3" fill="#f4f4f4" stroke="#444" stroke-width="1.200"/><path d="M5.500 7 L8.500 3.500 L11.500 7 Z" fill="#333"/></svg>
<svg class="r" style="left:1432.5px;top:33.5px;" width="5" height="4" viewBox="0 0 5 4"><path d="M0 0 L5 0 L2.5 3 Z" fill="#333"/></svg>
<div class="r" style="left:1328px;top:4px;width:1px;height:16px;background:#b5b5b5;"></div>
<div class="r" style="left:0px;top:156px;width:258px;height:300px;background:#f0f0f0;"></div>
<div class="r" style="left:257px;top:156px;width:3px;height:600px;background:#f0f0f0;"></div>
<span class="t" style="left:3px;top:158.6px;font-size:12px;line-height:14px;color:#222;transform:scaleX(0.8757);">Propiedades</span>
<svg class="r" style="left:244px;top:160px;" width="10" height="10" viewBox="0 0 10 10"><path d="M1 1 L9 9 M9 1 L1 9" stroke="#111" stroke-width="1.600"/></svg>
<div class="r" style="left:2px;top:175px;width:255px;height:63px;background:#f0f0f0;border:1px solid #dedede;"></div>
<div class="r" style="left:4px;top:176px;width:59px;height:60px;background:#f0f0f0;border:1px solid #d8d8d8;"></div>
<svg class="r" style="left:19px;top:191px;" width="29" height="30" viewBox="0 0 29 30"><path d="M3.500 13 L13.500 18 V28.500 L3.500 23.500 Z" fill="#fdfdfd" stroke="#444a52" stroke-width="1.300" stroke-linejoin="round"/><path d="M13.500 18 L24.500 12.500 V22.500 L13.500 28.500 Z" fill="#dfe2e6" stroke="#444a52" stroke-width="1.300" stroke-linejoin="round"/><path d="M1.500 12.300 Q1.200 11 2.500 10 L13.500 1.800 Q14.500 1.200 15.500 1.800 L26.500 9.800 Q27.500 11 26.500 11.800 L14 18.500 Q13.300 18.800 12.600 18.400 Z" fill="#d3d7dc" stroke="#444a52" stroke-width="1.400" stroke-linejoin="round"/><path d="M2.500 12.500 L14.500 4 L26 10.800" fill="none" stroke="#f4f5f6" stroke-width="1.100"/><path d="M5.500 17.500 L9 19.200 V26.200 L5.500 24.500 Z" fill="#3a3f47"/></svg>
<span class="t" style="left:66.5px;top:199.6px;font-size:12px;line-height:14px;color:#222;transform:scaleX(0.8641);">Vista 3D</span>
<svg class="r" style="left:246.5px;top:205.5px;" width="7" height="5" viewBox="0 0 7 5"><path d="M0 0 L7 0 L3.5 4 Z" fill="#333"/></svg>
<div class="r" style="left:2px;top:241px;width:175px;height:18px;background:#e4e4e4;border:1px solid #c8c8c8;"></div>
<span class="t" style="left:4px;top:243.1px;font-size:12px;line-height:14px;color:#111;transform:scaleX(0.8649);">Vista 3D: {3D}</span>
<svg class="r" style="left:164px;top:246px;" width="10" height="7" viewBox="0 0 10 7"><path d="M1 1 L5 5.500 L9 1" fill="none" stroke="#444" stroke-width="1.200"/></svg>
<svg class="r" style="left:181px;top:240px;" width="16" height="17" viewBox="0 0 16 17"><rect x="1.500" y="1.500" width="5" height="6" fill="#fff" stroke="#333" stroke-width="1.200"/><rect x="1.500" y="10" width="5" height="5.500" fill="#fff" stroke="#333" stroke-width="1.200"/><rect x="8.500" y="1.500" width="6" height="14" fill="#fff" stroke="#333" stroke-width="1.200"/><path d="M10 8 H13 M10 11 H13" stroke="#333"/></svg>
<span class="t" style="left:201px;top:242.1px;font-size:12px;line-height:14px;color:#111;transform:scaleX(0.8885);">Editar tipo</span>
<div class="r" style="left:0px;top:260px;width:242px;height:169px;background:#fff;"></div>
<span class="t" style="left:8px;top:261.6px;font-size:12px;line-height:14px;color:#858585;transform:scaleX(0.8635);">Posición de cámara</span>
<span class="t" style="left:118px;top:261.6px;font-size:12px;line-height:14px;color:#858585;transform:scaleX(0.9181);">Ajustando</span>
<div class="r" style="left:0px;top:276.5px;width:241px;height:16.0px;background:#dcdcdc;"></div>
<span class="t" style="left:3px;top:278.6px;font-size:12px;line-height:14px;color:#111;transform:scaleX(0.8894);">Datos de identidad</span>
<svg class="r" style="left:229px;top:281px;" width="8" height="9" viewBox="0 0 8 9"><path d="M1 4 L4 1 L7 4 M1 8 L4 5 L7 8" fill="none" stroke="#222" stroke-width="1.100"/></svg>
<span class="t" style="left:8px;top:293.6px;font-size:12px;line-height:14px;color:#111;transform:scaleX(0.8765);">Plantilla de vista</span>
<div class="r" style="left:117px;top:293.5px;width:113px;height:14.0px;background:#e1e1e1;border:1px solid #adadad;"></div>
<span class="t" style="left:145px;top:293.6px;font-size:12px;line-height:14px;color:#111;transform:scaleX(0.9367);">&lt;Ninguno&gt;</span>
<span class="t" style="left:8px;top:309.6px;font-size:12px;line-height:14px;color:#111;transform:scaleX(0.8928);">Nombre de vista</span>
<span class="t" style="left:118px;top:309.6px;font-size:12px;line-height:14px;color:#111;transform:scaleX(0.8563);">{3D}</span>
<span class="t" style="left:8px;top:326.1px;font-size:12px;line-height:14px;color:#858585;transform:scaleX(0.8767);">Dependencia</span>
<span class="t" style="left:118px;top:326.1px;font-size:12px;line-height:14px;color:#858585;transform:scaleX(0.8940);">Independiente</span>
<span class="t" style="left:8px;top:342.6px;font-size:12px;line-height:14px;color:#111;transform:scaleX(0.8944);">Título en plano</span>
<div class="r" style="left:0px;top:357.5px;width:241px;height:16.0px;background:#dcdcdc;"></div>
<span class="t" style="left:3px;top:359.6px;font-size:12px;line-height:14px;color:#111;transform:scaleX(0.8479);">Proceso por fases</span>
<svg class="r" style="left:229px;top:362px;" width="8" height="9" viewBox="0 0 8 9"><path d="M1 4 L4 1 L7 4 M1 8 L4 5 L7 8" fill="none" stroke="#222" stroke-width="1.100"/></svg>
<span class="t" style="left:8px;top:375.1px;font-size:12px;line-height:14px;color:#111;transform:scaleX(0.8493);">Filtro de fases</span>
<span class="t" style="left:118px;top:375.1px;font-size:12px;line-height:14px;color:#111;transform:scaleX(0.9205);">Mostrar todo</span>
<span class="t" style="left:8px;top:391.1px;font-size:12px;line-height:14px;color:#111;transform:scaleX(0.7497);">Fase</span>
<span class="t" style="left:118px;top:391.1px;font-size:12px;line-height:14px;color:#111;transform:scaleX(0.9015);">Nueva construcción</span>
<svg class="r" style="left:0px;top:260px;" width="242" height="147" viewBox="0 0 242 147"><g stroke="#a8a8a8" stroke-width="1" stroke-dasharray="1 1" fill="none"><path d="M0 16.5 H241" /><path d="M0 32.5 H241" /><path d="M0 48.5 H241" /><path d="M0 64.5 H241" /><path d="M0 81 H241" /><path d="M0 97.5 H241" /><path d="M0 113.5 H241" /><path d="M0 129.5 H241" /><path d="M0 146 H241" /><path d="M115.500 0 V146 M230.500 0 V146 M240.500 0 V146"/></g></svg>
<div class="r" style="left:0px;top:277.0px;width:240px;height:15.5px;background:#dcdcdc;"></div>
<span class="t" style="left:3px;top:278.6px;font-size:12px;line-height:14px;color:#111;transform:scaleX(0.8894);">Datos de identidad</span>
<svg class="r" style="left:229px;top:281px;" width="8" height="9" viewBox="0 0 8 9"><path d="M1 4 L4 1 L7 4 M1 8 L4 5 L7 8" fill="none" stroke="#222" stroke-width="1.100"/></svg>
<div class="r" style="left:0px;top:358.0px;width:240px;height:15.5px;background:#dcdcdc;"></div>
<span class="t" style="left:3px;top:359.6px;font-size:12px;line-height:14px;color:#111;transform:scaleX(0.8479);">Proceso por fases</span>
<svg class="r" style="left:229px;top:362px;" width="8" height="9" viewBox="0 0 8 9"><path d="M1 4 L4 1 L7 4 M1 8 L4 5 L7 8" fill="none" stroke="#222" stroke-width="1.100"/></svg>
<div class="r" style="left:242px;top:260px;width:15px;height:169px;background:#f0f0f0;"></div>
<div class="r" style="left:243px;top:374px;width:12px;height:40px;background:#cdcdcd;"></div>
<svg class="r" style="left:244.5px;top:265.0px;" width="9" height="7" viewBox="0 0 9 7"><path d="M1 5 L4.500 1.500 L8 5" fill="none" stroke="#444" stroke-width="1.500"/></svg>
<svg class="r" style="left:244.5px;top:418.0px;" width="9" height="7" viewBox="0 0 9 7"><path d="M1 1.500 L4.500 5 L8 1.500" fill="none" stroke="#444" stroke-width="1.500"/></svg>
<span class="t" style="left:3px;top:433.6px;font-size:12px;line-height:14px;color:#0066cc;transform:scaleX(0.8843);text-decoration:underline;">Ayuda de propiedades</span>
<div class="r" style="left:189px;top:432px;width:66px;height:18px;background:#cccccc;"></div>
<span class="t" style="left:205px;top:434.6px;font-size:12px;line-height:14px;color:#9a9a9a;transform:scaleX(0.9270);">Aplicar</span>
<div class="r" style="left:0px;top:456px;width:258px;height:300px;background:#f0f0f0;"></div>
<div class="r" style="left:0px;top:455px;width:258px;height:1px;background:#d9d9d9;"></div>
<span class="t" style="left:3px;top:458.6px;font-size:12px;line-height:14px;color:#222;transform:scaleX(0.8909);">Navegador de proyectos - examen</span>
<svg class="r" style="left:244px;top:460px;" width="10" height="10" viewBox="0 0 10 10"><path d="M1 1 L9 9 M9 1 L1 9" stroke="#111" stroke-width="1.600"/></svg>
<div class="r" style="left:0px;top:473px;width:243px;height:277px;background:#fff;"></div>
<div class="r" style="left:243px;top:473px;width:14px;height:277px;background:#f0f0f0;"></div>
<div class="r" style="left:244px;top:488px;width:12px;height:212px;background:#cdcdcd;"></div>
<svg class="r" style="left:245.5px;top:477.5px;" width="9" height="7" viewBox="0 0 9 7"><path d="M1 5 L4.500 1.500 L8 5" fill="none" stroke="#444" stroke-width="1.500"/></svg>
<svg class="r" style="left:245.5px;top:740.5px;" width="9" height="7" viewBox="0 0 9 7"><path d="M1 1.500 L4.500 5 L8 1.500" fill="none" stroke="#444" stroke-width="1.500"/></svg>
<div class="r" style="left:58px;top:522px;width:38px;height:16px;background:#e2e2e2;"></div>
<svg class="r" style="left:0px;top:473px;" width="243" height="277" viewBox="0 0 243 277"><g stroke="#b0b0b0" stroke-dasharray="1 1" fill="none"><path d="M8.500 13 V268 M26.500 17 V154"/><path d="M9 8.5 H18"/><path d="M27 25.0 H40"/><path d="M27 41.0 H40"/><path d="M45 57.5 H58"/><path d="M45 73.5 H58"/><path d="M45 90.0 H58"/><path d="M45 106.0 H58"/><path d="M27 122.0 H40"/><path d="M27 138.0 H40"/><path d="M27 154.5 H40"/><path d="M45 171.0 H58"/><path d="M45 187.0 H58"/><path d="M45 203.0 H58"/><path d="M45 219.5 H58"/><path d="M9 235.5 H18"/><path d="M9 252.0 H18"/><path d="M9 268.0 H18"/><path d="M44.500 47 V106 M44.500 161 V219"/></g></svg>
<span class="t" style="left:39px;top:474.6px;font-size:12px;line-height:14px;color:#111;transform:scaleX(0.8639);">Vistas (todo)</span>
<svg class="r" style="left:4px;top:477px;" width="9" height="9" viewBox="0 0 9 9"><rect x=".500" y=".500" width="8" height="8" fill="#fff" stroke="#8a8a8a"/><path d="M2 4.500 H7" stroke="#333"/></svg>
<svg class="r" style="left:19px;top:474px;" width="15" height="14" viewBox="0 0 15 14"><path d="M1 4 V1 H4 M11 1 H14 V4 M14 10 V13 H11 M4 13 H1 V10" fill="none" stroke="#333" stroke-width="1.200"/><rect x="4.500" y="4" width="6" height="6" rx="1.500" fill="#fff" stroke="#333" stroke-width="1.200"/></svg>
<span class="t" style="left:42px;top:491.1px;font-size:12px;line-height:14px;color:#111;transform:scaleX(0.8738);">Planos estructurales</span>
<svg class="r" style="left:22px;top:493.5px;" width="9" height="9" viewBox="0 0 9 9"><rect x=".500" y=".500" width="8" height="8" fill="#fff" stroke="#8a8a8a"/><path d="M2 4.500 H7" stroke="#333"/><path d="M4.500 2 V7" stroke="#333"/></svg>
<span class="t" style="left:42px;top:507.1px;font-size:12px;line-height:14px;color:#111;transform:scaleX(0.8725);">Planos de planta</span>
<svg class="r" style="left:22px;top:509.5px;" width="9" height="9" viewBox="0 0 9 9"><rect x=".500" y=".500" width="8" height="8" fill="#fff" stroke="#8a8a8a"/><path d="M2 4.500 H7" stroke="#333"/></svg>
<span class="t" style="left:60px;top:523.6px;font-size:12px;line-height:14px;color:#111;transform:scaleX(0.8997);">Nivel 1</span>
<span class="t" style="left:60px;top:539.6px;font-size:12px;line-height:14px;color:#111;transform:scaleX(0.8997);">Nivel 2</span>
<span class="t" style="left:60px;top:556.1px;font-size:12px;line-height:14px;color:#111;transform:scaleX(0.8997);">Nivel 3</span>
<span class="t" style="left:60px;top:572.1px;font-size:12px;line-height:14px;color:#111;transform:scaleX(0.8746);">Planimetría general</span>
<span class="t" style="left:42px;top:588.1px;font-size:12px;line-height:14px;color:#111;transform:scaleX(0.8831);">Planos de techo</span>
<svg class="r" style="left:22px;top:590.5px;" width="9" height="9" viewBox="0 0 9 9"><rect x=".500" y=".500" width="8" height="8" fill="#fff" stroke="#8a8a8a"/><path d="M2 4.500 H7" stroke="#333"/><path d="M4.500 2 V7" stroke="#333"/></svg>
<span class="t" style="left:42px;top:604.1px;font-size:12px;line-height:14px;color:#111;transform:scaleX(0.8605);">Vistas 3D</span>
<svg class="r" style="left:22px;top:606.5px;" width="9" height="9" viewBox="0 0 9 9"><rect x=".500" y=".500" width="8" height="8" fill="#fff" stroke="#8a8a8a"/><path d="M2 4.500 H7" stroke="#333"/><path d="M4.500 2 V7" stroke="#333"/></svg>
<span class="t" style="left:42px;top:620.6px;font-size:12px;line-height:14px;color:#111;transform:scaleX(0.8738);">Alzados (Alzado 1)</span>
<svg class="r" style="left:22px;top:623px;" width="9" height="9" viewBox="0 0 9 9"><rect x=".500" y=".500" width="8" height="8" fill="#fff" stroke="#8a8a8a"/><path d="M2 4.500 H7" stroke="#333"/></svg>
<span class="t" style="left:60px;top:637.1px;font-size:12px;line-height:14px;color:#111;transform:scaleX(0.7913);">Este</span>
<span class="t" style="left:60px;top:653.1px;font-size:12px;line-height:14px;color:#111;transform:scaleX(0.9202);">Norte</span>
<span class="t" style="left:60px;top:669.1px;font-size:12px;line-height:14px;color:#111;transform:scaleX(0.8434);">Oeste</span>
<span class="t" style="left:60px;top:685.6px;font-size:12px;line-height:14px;color:#111;transform:scaleX(0.8033);">Sur</span>
<span class="t" style="left:39px;top:701.6px;font-size:12px;line-height:14px;color:#111;transform:scaleX(0.8455);">Leyendas</span>
<svg class="r" style="left:19px;top:701px;" width="15" height="14" viewBox="0 0 15 14"><rect x=".700" y=".700" width="13.500" height="12.500" fill="#fff" stroke="#333" stroke-width="1.200"/><path d="M1 3.500 H14" stroke="#333" stroke-width="2"/><path d="M3 7 H6 M8 7 H12 M3 10 H6 M8 10 H12" stroke="#555" stroke-width="1.500"/></svg>
<span class="t" style="left:39px;top:718.1px;font-size:12px;line-height:14px;color:#111;transform:scaleX(0.8931);">Tablas de planificación/Cantidades (todo)</span>
<svg class="r" style="left:4px;top:720.5px;" width="9" height="9" viewBox="0 0 9 9"><rect x=".500" y=".500" width="8" height="8" fill="#fff" stroke="#8a8a8a"/><path d="M2 4.500 H7" stroke="#333"/><path d="M4.500 2 V7" stroke="#333"/></svg>
<svg class="r" style="left:19px;top:717.5px;" width="15" height="14" viewBox="0 0 15 14"><rect x=".700" y="1.700" width="13.500" height="11" fill="#fff" stroke="#333" stroke-width="1.200"/><path d="M1 5 H14 M1 8.500 H14 M5 2 V12.500" stroke="#333" stroke-width="1"/></svg>
<span class="t" style="left:39px;top:734.1px;font-size:12px;line-height:14px;color:#111;transform:scaleX(0.8968);">Planos (todo)</span>
<svg class="r" style="left:19px;top:733.5px;" width="15" height="14" viewBox="0 0 15 14"><path d="M.700 2 H10 L14 5.500 V13 H.700 Z" fill="#fff" stroke="#333" stroke-width="1.200"/><rect x="3" y="6" width="6" height="5" fill="none" stroke="#555"/><path d="M10 2 V6 H14" fill="none" stroke="#333"/></svg>
<div class="r" style="left:258px;top:156px;width:1182px;height:18px;background:#cdcdcd;"></div>
<div class="r" style="left:257px;top:174px;width:3px;height:578px;background:#d9d9d9;"></div>
<div class="r" style="left:260px;top:174px;width:1165.5px;height:560.5px;background:#fff;"></div>
<div class="r" style="left:1425.5px;top:174px;width:14.5px;height:560.5px;background:#f0f0f0;"></div>
<div class="r" style="left:491px;top:156px;width:115px;height:19px;background:#fff;"></div>
<svg class="r" style="left:264px;top:157.5px;" width="16" height="14" viewBox="0 0 16 14"><rect x="1.500" y="1" width="7.500" height="10" fill="#efefef" stroke="#8f8f8f" stroke-width="1"/><rect x="6.500" y="2.500" width="8" height="10.500" fill="#f1f1f1" stroke="#8f8f8f" stroke-width="1"/><path d="M8.500 5.500 H12 M9 8.500 H13" stroke="#b0b0b0" stroke-width="1"/></svg>
<svg class="r" style="left:379.5px;top:157.5px;" width="16" height="14" viewBox="0 0 16 14"><rect x="1.500" y="1" width="7.500" height="10" fill="#efefef" stroke="#8f8f8f" stroke-width="1"/><rect x="6.500" y="2.500" width="8" height="10.500" fill="#f1f1f1" stroke="#8f8f8f" stroke-width="1"/><path d="M8.500 5.500 H12 M9 8.500 H13" stroke="#b0b0b0" stroke-width="1"/></svg>
<svg class="r" style="left:609.5px;top:157.5px;" width="16" height="14" viewBox="0 0 16 14"><rect x="1.500" y="1" width="7.500" height="10" fill="#efefef" stroke="#8f8f8f" stroke-width="1"/><rect x="6.500" y="2.500" width="8" height="10.500" fill="#f1f1f1" stroke="#8f8f8f" stroke-width="1"/><path d="M8.500 5.500 H12 M9 8.500 H13" stroke="#b0b0b0" stroke-width="1"/></svg>
<span class="t" style="left:286px;top:158.6px;font-size:12px;line-height:14px;color:#505050;transform:scaleX(0.8861);">Nivel 3</span>
<span class="t" style="left:401px;top:158.6px;font-size:12px;line-height:14px;color:#505050;transform:scaleX(0.8861);">Nivel 2</span>
<span class="t" style="left:631px;top:158.6px;font-size:12px;line-height:14px;color:#505050;transform:scaleX(0.8861);">Nivel 1</span>
<span class="t" style="left:516px;top:158.6px;font-size:12px;line-height:14px;color:#111;transform:scaleX(0.9419);">{3D}</span>
<svg class="r" style="left:495px;top:158px;" width="15" height="14" viewBox="0 0 15 14"><path d="M1.200 6 L7 1.200 L13.800 5.500 V10.500 L7.500 13 L1.200 10.500 Z" fill="#f6f6f6" stroke="#30353c" stroke-width="1.200" stroke-linejoin="round"/><path d="M1.200 6 L7.500 8 L13.800 5.500 M7.500 8 V13 M7 1.200 L7.500 8" fill="none" stroke="#30353c" stroke-width="1"/><rect x="3" y="8.500" width="2.300" height="3.300" fill="#30353c"/></svg>
<svg class="r" style="left:592px;top:160px;" width="10" height="10" viewBox="0 0 10 10"><path d="M1 1 L9 9 M9 1 L1 9" stroke="#111" stroke-width="1.600"/></svg>
<svg class="r" style="left:1427px;top:161px;" width="10" height="9" viewBox="0 0 10 9"><path d="M1 1.500 H9" stroke="#222" stroke-width="1.400"/><path d="M1.500 4.500 H8.500 L5 8.500 Z" fill="#222"/></svg>
<svg class="r" style="left:1427.5px;top:178.5px;" width="9" height="7" viewBox="0 0 9 7"><path d="M1 5 L4.500 1.500 L8 5" fill="none" stroke="#444" stroke-width="1.500"/></svg>
<svg class="r" style="left:1427.5px;top:723.5px;" width="9" height="7" viewBox="0 0 9 7"><path d="M1 1.500 L4.500 5 L8 1.500" fill="none" stroke="#444" stroke-width="1.500"/></svg>
<div class="r" style="left:1426px;top:448px;width:13px;height:15.5px;background:#cdcdcd;"></div>
<svg class="r" style="left:0;top:0" width="1440" height="740" viewBox="0 0 1440 740"><g clip-path="url(#cv)"><clipPath id="cv"><rect x="260" y="175.500" width="1165.500" height="559"/></clipPath><defs><pattern id="tile" width="15.800" height="6.200" patternUnits="userSpaceOnUse" patternTransform="translate(646 201) skewX(2.500)"><rect width="15.800" height="6.200" fill="#b8a88c"/><path d="M0 .800 H15.800 M.800 0 V6.200 M8 0 V6.200" stroke="#705e41" stroke-width="1.350"/></pattern><pattern id="bal" width="6.320" height="40" patternUnits="userSpaceOnUse" patternTransform="translate(732 0)"><rect width="6.320" height="40" fill="#dc8c50"/><rect x="0" width="1.800" height="40" fill="#1a0f08"/><rect x="1.800" width=".700" height="40" fill="#c07a40"/></pattern></defs><g stroke="#222" stroke-width="1.400" fill="none" stroke-dasharray="2 19.300 27 21.880"><path d="M262 221.600 L1424 207.500"/><path d="M262 341.900 L1424 325.700"/></g><polygon points="494.500,384 500,384 500,470 497,470" fill="#6a6a6a" stroke="#333" stroke-width="0.8" stroke-linejoin="round"/><polygon points="496,387 499,387 499,430 497.500,410" fill="#fff" stroke="none" stroke-width="0" stroke-linejoin="round"/><polygon points="500,229 520,301 520,489 535,489 544,529 544,650 551,652 551,664 547,664 497.500,470 500,384" fill="#525252" stroke="#2a2a2a" stroke-width="0.8" stroke-linejoin="round"/><polygon points="520,316 527,316 527,489 520,489" fill="#c4c4c4" stroke="#555" stroke-width="0.6" stroke-linejoin="round"/><path d="M520 437 H527" stroke="#555" stroke-width=".8"/><polygon points="527,324 535,356 535,489 527,489" fill="#5e5e5e" stroke="#2a2a2a" stroke-width="0.6" stroke-linejoin="round"/><polygon points="500.500,229 662,175 668,175 520,301" fill="#574e40" stroke="#1c1812" stroke-width="1.0" stroke-linejoin="round"/><polygon points="668,175 722,175 886,295 870,301 520,301" fill="url(#tile)" stroke="#1c1812" stroke-width="1.0" stroke-linejoin="round"/><polygon points="722,175 727,175 869,224 886,295" fill="#a08f77" stroke="#1c1812" stroke-width="1.0" stroke-linejoin="round"/><polygon points="520,301 700,301 700,315.500 520,315.500" fill="#7d6f57" stroke="#1c1812" stroke-width="1.0" stroke-linejoin="round"/><polygon points="520,316 548,316 527,324 520,324" fill="#c8c8c8" stroke="#555" stroke-width="0.6" stroke-linejoin="round"/><polygon points="690,316 700,316 701.500,321.500 697,320" fill="#d9d9d9" stroke="#555" stroke-width="0.5" stroke-linejoin="round"/><polygon points="535,369 901.500,366.500 901.500,489 535,489" fill="#b3b3b3" stroke="#333" stroke-width="0.8" stroke-linejoin="round"/><polygon points="527,324 597,301 535,355.500" fill="#574e40" stroke="#1c1812" stroke-width="1.0" stroke-linejoin="round"/><polygon points="597,301 641,301 714,355.500 535,355.500" fill="url(#tile)" stroke="#1c1812" stroke-width="1.0" stroke-linejoin="round"/><polygon points="641,301 700,319 710,322 714,355.500" fill="#a08f77" stroke="#1c1812" stroke-width="1.0" stroke-linejoin="round"/><polygon points="535,355.500 714,355.500 714,368 535,369.500" fill="#7d6f57" stroke="#1c1812" stroke-width="1.0" stroke-linejoin="round"/><polygon points="701,300 800,267.500 802.500,278 715,353" fill="#574e40" stroke="#1c1812" stroke-width="1.0" stroke-linejoin="round"/><polygon points="802.500,278 901,350.500 715,353" fill="url(#tile)" stroke="#1c1812" stroke-width="1.0" stroke-linejoin="round"/><polygon points="800,267.500 887.500,296 901,350.500 802.500,278" fill="#a08f77" stroke="#1c1812" stroke-width="1.0" stroke-linejoin="round"/><polygon points="715,353 901.500,350.500 901.500,366.500 715,368" fill="#7d6f57" stroke="#1c1812" stroke-width="1.0" stroke-linejoin="round"/><path d="M714.500 355 V368" stroke="#1c1812" stroke-width="1.200"/><rect x="571" y="406.500" width="51.500" height="52" fill="#0c0c0c"/><rect x="572.500" y="408" width="41" height="17" fill="#6699c4"/><rect x="615" y="408" width="5.500" height="17" fill="#86a6bd"/><rect x="572.500" y="429" width="48" height="24.500" fill="#86a6bd"/><rect x="572.500" y="425" width="30" height="2.500" fill="#0a3350"/><rect x="722" y="404" width="52" height="52" fill="#15110c"/><rect x="724" y="406" width="22.500" height="28" fill="#8a7b66"/><rect x="749.500" y="406" width="21.500" height="27" fill="#86a5bb"/><rect x="724" y="434.500" width="47.500" height="18" fill="#a48b69"/><rect x="746.500" y="406" width="1" height="28" fill="#6f92ad"/><rect x="814" y="396" width="49" height="91" fill="#9a6233" stroke="#2a1608" stroke-width="1"/><rect x="817" y="399" width="43" height="88" fill="#a3683a" stroke="#2a1608" stroke-width="1"/><path d="M850 443.500 H857 M856 442 V446.500" stroke="#1a0e05" stroke-width="2"/><polygon points="535,489 722,489 722,501 541,501" fill="#b9b9b9" stroke="#333" stroke-width="0.7" stroke-linejoin="round"/><polygon points="541,501 722,501 722,527 549,529" fill="#b6b6b6" stroke="#333" stroke-width="0.7" stroke-linejoin="round"/><polygon points="535,489 541,489.500 550,529 544,530" fill="#ececec" stroke="#555" stroke-width="0.5" stroke-linejoin="round"/><rect x="732" y="489" width="164" height="37.500" fill="url(#bal)"/><polygon points="721.500,451 723,451 733,489 732.500,526.500 729,526.500 721.500,498" fill="#111" stroke="#111" stroke-width="0.5" stroke-linejoin="round"/><polygon points="721.500,499 729,526.500 721.500,526.500" fill="#c27c46" stroke="none" stroke-width="0" stroke-linejoin="round"/><path d="M724 451 L733.500 489" stroke="#ddd" stroke-width="1.200"/><polygon points="896,489 901,489 905,526.500 896,526.500" fill="#d88a4e" stroke="none" stroke-width="0" stroke-linejoin="round"/><polygon points="901.500,448 903,448 912.800,487.500 912.800,526 905.500,526.500 900,489 901.500,489" fill="#111" stroke="#111" stroke-width="0.5" stroke-linejoin="round"/><path d="M903 449 L912.500 488" stroke="#eee" stroke-width="1.100"/><polygon points="900.500,492 903,492 906.500,520 905,524" fill="#f2f2f2" stroke="none" stroke-width="0" stroke-linejoin="round"/><polygon points="906,508 907.500,508 909.500,525 907.500,525" fill="#f2f2f2" stroke="none" stroke-width="0" stroke-linejoin="round"/><path d="M731 488.500 H912" stroke="#111" stroke-width="1.600"/><path d="M775 488 H812 M848 487.500 H905" stroke="#eee" stroke-width="1"/><polygon points="544,529.500 911.500,526.500 911.500,645 544,650" fill="#b0b0b0" stroke="#333" stroke-width="0.8" stroke-linejoin="round"/><polygon points="551,651 905,646 905,660 551,664.500" fill="#c9c9c9" stroke="#444" stroke-width="0.8" stroke-linejoin="round"/><polygon points="544,650 551,651 551,664.500 548,664.500" fill="#4a4a4a" stroke="#222" stroke-width="0.5" stroke-linejoin="round"/><rect x="564" y="546.500" width="52" height="12" fill="#6c6c6c" stroke="#1a1a1a"/><rect x="562" y="553.500" width="56" height="63" fill="#2e2e2e" stroke="#111"/><rect x="564" y="614" width="52" height="6.500" fill="#3a3a3a" stroke="#111"/><rect x="568" y="559" width="19" height="49" fill="#b2bac3"/><rect x="593" y="559" width="19" height="49" fill="#b2bac3"/><rect x="571.500" y="559" width="15.500" height="16" fill="#7c9fb9"/><rect x="593" y="559" width="19" height="16" fill="#7c9fb9"/><rect x="571.500" y="575" width="40.500" height="3" fill="#4a5e70"/><rect x="587" y="556" width="6" height="55" fill="#2e2e2e"/><rect x="656.500" y="559" width="46" height="90" fill="#c6c6c6" stroke="#222" stroke-width="1"/><rect x="659.500" y="562" width="40" height="87" fill="#cfcfcf" stroke="#444" stroke-width=".8"/><rect x="661.500" y="569" width="36" height="72" fill="#d6d6d6" stroke="#333" stroke-width=".8"/><rect x="668.500" y="569" width="22" height="72" fill="#cdcdcd" stroke="#222" stroke-width=".9"/><g stroke="#222" stroke-width=".9"><path d="M668.500 577 H690.500"/><path d="M668.500 584.5 H690.500"/><path d="M668.500 592 H690.500"/><path d="M668.500 599 H690.500"/><path d="M668.500 606 H690.500"/><path d="M668.500 613 H690.500"/><path d="M668.500 620 H690.500"/><path d="M668.500 627 H690.500"/><path d="M668.500 634 H690.500"/></g><rect x="691" y="593" width="2.200" height="24" fill="#111"/><rect x="694" y="606.500" width="3" height="2.500" fill="#111"/><rect x="762" y="564" width="104.500" height="82" fill="#d1d3cd" stroke="#222" stroke-width="1"/><g stroke="#222" stroke-width="1"><path d="M762 575.5 L866.500 574.5"/><path d="M762 587 L866.500 586"/><path d="M762 599 L866.500 598"/><path d="M762 611 L866.500 610"/><path d="M762 622.5 L866.500 621.5"/><path d="M762 634.5 L866.500 633.5"/></g><ellipse cx="1353" cy="271" rx="54" ry="15" fill="#fbfbfb" stroke="#d6d6d6" stroke-width="1" stroke-dasharray="3 2"/><ellipse cx="1353" cy="270.500" rx="43" ry="10.500" fill="#fff" stroke="#e0e0e0" stroke-dasharray="3 2"/><ellipse cx="1356" cy="271.500" rx="28" ry="6.500" fill="#e4e4e4"/><ellipse cx="1356" cy="271" rx="22" ry="4.500" fill="#d4d4d4"/><path d="M1300 268 l4 -2 v4 z M1406 268 l-4 -2 v4 z M1350 283 l6 0 l-3 4 z" fill="#cfcfcf"/><polygon points="1335.500,231 1375.500,231 1375.500,269 1335.500,269.500" fill="#dcdde0" stroke="#a9a9ab" stroke-width="1"/><polygon points="1335.500,225.500 1355,225.500 1357,224.500 1371,224.500 1375.500,231 1335.500,231" fill="#efefef" stroke="#a6a6a8" stroke-width=".9"/><path d="M1338 228.300 H1372" stroke="#b5b5b8" stroke-width=".9" stroke-dasharray="1.500 1"/><text x="1355.500" y="255" font-size="9" font-weight="bold" fill="#8b8d92" text-anchor="middle" font-family="Liberation Sans, sans-serif" textLength="32.500" lengthAdjust="spacingAndGlyphs">FRONTAL</text><rect x="1393" y="310.500" width="30.700" height="104.500" rx="4" fill="#f4f4f4" stroke="#bdbdbd" stroke-width="1.300"/><path d="M1396 362.500 H1421" stroke="#ccc"/><circle cx="1417.500" cy="315.500" r="3.200" fill="#dedede" stroke="#aaa"/><circle cx="1417.500" cy="409" r="3.200" fill="#dedede" stroke="#aaa"/><path d="M1415.500 409 H1419.500" stroke="#999"/><circle cx="1408.300" cy="338" r="9.300" fill="#eee" stroke="#999" stroke-width="1.300"/><circle cx="1408.300" cy="338" r="5.300" fill="#f8f8f8" stroke="#999" stroke-width="1.200"/><path d="M1405.500 355 H1411.500 L1408.500 358 Z M1405.500 392.500 H1411.500 L1408.500 395.500 Z" fill="#999"/><rect x="1401.500" y="371" width="9" height="9" fill="#8dc88d" stroke="#5a9a5a" stroke-width=".8"/><circle cx="1411.500" cy="379" r="3.200" fill="#fff" stroke="#888"/><path d="M1413.500 381.500 L1416.500 384.500" stroke="#888" stroke-width="1.300"/><path d="M1406.500 327 H1424.500" stroke="#222" stroke-width="1.400"/></g></svg>
<div class="r" style="left:260px;top:734.5px;width:1180px;height:17.5px;background:#f0f0f0;"></div>
<div class="r" style="left:0px;top:750px;width:260px;height:2px;background:#f0f0f0;"></div>
<span class="t" style="left:284.5px;top:737.6px;font-size:12px;line-height:14px;color:#111;transform:scaleX(0.7903);">1 : 100</span>
<div class="r" style="left:1004px;top:737px;width:14px;height:13px;background:#cdcdcd;"></div>
<svg class="r" style="left:599px;top:739px;" width="7" height="9" viewBox="0 0 7 9"><path d="M5.500 1 L1.500 4.500 L5.500 8" fill="none" stroke="#222" stroke-width="1.600"/></svg>
<svg class="r" style="left:1414px;top:738px;" width="7" height="9" viewBox="0 0 7 9"><path d="M1.500 1 L5.500 4.500 L1.500 8" fill="none" stroke="#222" stroke-width="1.600"/></svg>
<svg class="r" style="left:1428px;top:740px;" width="10" height="10" viewBox="0 0 10 10"><g fill="#b5b5b5"><rect x="7" y="1" width="2" height="2"/><rect x="4" y="4" width="2" height="2"/><rect x="7" y="4" width="2" height="2"/><rect x="1" y="7" width="2" height="2"/><rect x="4" y="7" width="2" height="2"/><rect x="7" y="7" width="2" height="2"/></g></svg>
<svg class="r" style="left:332.5px;top:735.5px;" width="15.5" height="13.7" viewBox="0 0 17 15"><rect x="1.500" y="2.500" width="13" height="10" fill="#fff" stroke="#333"/><path d="M1.500 5.500 H14.500 M1.500 8.500 H14.500 M4.500 2.500 V12.500 M7.500 2.500 V12.500 M10.500 2.500 V12.500" stroke="#333" stroke-width="1" stroke-dasharray="1.500 1"/></svg>
<svg class="r" style="left:351.5px;top:735.5px;" width="15.5" height="13.7" viewBox="0 0 17 15"><path d="M1.500 6 L5 2.500 H15 L11.500 6 Z M1.500 6 V12.500 H11.500 V6 M11.500 12.500 L15 9 V2.500" fill="#e3f0fb" stroke="#2a6fad" stroke-width="1.200"/></svg>
<svg class="r" style="left:369.5px;top:735.5px;" width="15.5" height="13.7" viewBox="0 0 17 15"><circle cx="7" cy="6.500" r="3.500" fill="#ffd24a" stroke="#c98a00"/><path d="M7 .500 V2 M7 11 V12.500 M1 6.500 H2.500 M11.500 6.500 H13 M2.800 2.300 L3.800 3.300 M10.200 9.700 L11.200 10.700 M2.800 10.700 L3.800 9.700 M10.200 3.300 L11.200 2.300" stroke="#c98a00"/><path d="M10 9 L15 14 M15 9 L10 14" stroke="#d42020" stroke-width="1.800"/></svg>
<svg class="r" style="left:389.5px;top:735.5px;" width="15.5" height="13.7" viewBox="0 0 17 15"><circle cx="6" cy="6" r="4" fill="#fff" stroke="#2a6fad" stroke-width="1.400"/><path d="M3 12.500 H9" stroke="#2a6fad" stroke-width="1.400"/><path d="M10 8.500 L15 13.500 M15 8.500 L10 13.500" stroke="#d42020" stroke-width="1.800"/></svg>
<svg class="r" style="left:407.5px;top:735.5px;" width="15.5" height="13.7" viewBox="0 0 17 15"><path d="M1 4 L7 2 L12 5 L9 10 L4 9 Z" fill="#f4f4f4" stroke="#555"/><circle cx="12.500" cy="9" r="2.800" fill="#fff" stroke="#2a6fad"/><path d="M12.500 12 V14" stroke="#2a6fad"/></svg>
<svg class="r" style="left:426.5px;top:735.5px;" width="15.5" height="13.7" viewBox="0 0 17 15"><path d="M1 7 H5 M3 5 V9" stroke="#2a6fad" stroke-width="1.300"/><rect x="5.500" y="3.500" width="9" height="8" fill="#e3f0fb" stroke="#2a6fad"/><path d="M7 5 L14 12 M14 5 L7 12" stroke="#d42020" stroke-width="1.800"/></svg>
<svg class="r" style="left:444.5px;top:735.5px;" width="15.5" height="13.7" viewBox="0 0 17 15"><path d="M1 7 H5 M3 5 V9" stroke="#2a6fad" stroke-width="1.300"/><rect x="5.500" y="3.500" width="7" height="8" fill="#e3f0fb" stroke="#2a6fad"/><circle cx="13" cy="7" r="2.500" fill="#fff" stroke="#2a6fad"/><path d="M13 10 V12.500" stroke="#2a6fad"/></svg>
<svg class="r" style="left:463.5px;top:735.5px;" width="15.5" height="13.7" viewBox="0 0 17 15"><path d="M1.500 7 L7.500 1.500 L13.500 7 V13 H1.500 Z" fill="#fff" stroke="#333" stroke-width="1.200"/><path d="M1.500 7 L6 9 V13 M6 9 L11 4.500" fill="none" stroke="#333"/><rect x="9" y="9" width="6" height="5" fill="#fff" stroke="#3a8a4a" stroke-width="1.200"/></svg>
<svg class="r" style="left:482.5px;top:735.5px;" width="15.5" height="13.7" viewBox="0 0 17 15"><path d="M1 6 Q3 3 5.500 6 T10 6 L13 4" fill="none" stroke="#333" stroke-width="1.200"/><circle cx="6" cy="9" r="2.500" fill="none" stroke="#333"/><circle cx="12" cy="9" r="2.500" fill="none" stroke="#333"/></svg>
<svg class="r" style="left:501.5px;top:735.5px;" width="15.5" height="13.7" viewBox="0 0 17 15"><circle cx="8" cy="6" r="3" fill="#fff" stroke="#2a8ad4" stroke-width="1.300"/><path d="M8 9.500 V13" stroke="#2a8ad4" stroke-width="1.300"/></svg>
<svg class="r" style="left:520.5px;top:735.5px;" width="15.5" height="13.7" viewBox="0 0 17 15"><rect x="1.500" y="3.500" width="10" height="9" fill="#fff" stroke="#222" stroke-width="1.300"/><path d="M1.500 3.500 V1.500 M4.500 3.500 V1.500 M7.500 3.500 V1.500 M10.500 3.500 V1.500" stroke="#222"/><circle cx="11.500" cy="9" r="3" fill="#fff" stroke="#222" stroke-width="1.100"/></svg>
<svg class="r" style="left:538.5px;top:735.5px;" width="15.5" height="13.7" viewBox="0 0 17 15"><path d="M1.500 7 L7.500 2 L13.500 7 V13 H1.500 Z" fill="#f7d9b0" stroke="#8a4a10"/><path d="M4 7 V13 M7 7 V13 M10 7 V13" stroke="#c0392b"/><circle cx="13" cy="8" r="2.500" fill="#ffd24a" stroke="#c98a00"/></svg>
<svg class="r" style="left:557.5px;top:735.5px;" width="15.5" height="13.7" viewBox="0 0 17 15"><path d="M2 5 L8 2.500 L13 5 V12 H2 Z" fill="#eee" stroke="#333"/><rect x="5" y="6" width="6" height="6" fill="#fff" stroke="#333"/><path d="M11 4 L15 4 V11" fill="none" stroke="#333"/></svg>
<svg class="r" style="left:576.5px;top:735.5px;" width="15.5" height="13.7" viewBox="0 0 17 15"><path d="M1.500 1 V14 M15.500 1 V14 M1.500 3.500 H15.500" stroke="#333" stroke-width="1.200" stroke-dasharray="2 1"/><rect x="7" y="8" width="6" height="5" fill="#888" stroke="#333"/><path d="M8.500 8 V6 Q10 4.500 11.500 6 V8" fill="none" stroke="#333"/></svg>
<div class="r" style="left:0px;top:752px;width:1440px;height:22px;background:#d4d4d4;"></div>
<span class="t" style="left:3px;top:757.6px;font-size:12px;line-height:14px;color:#111;transform:scaleX(0.8581);">Clic para seleccionar, TAB para alternar, CTRL para añadir y MAYÚS para anular una selección.</span>
<svg class="r" style="left:524px;top:756px;" width="17" height="16" viewBox="0 0 17 16"><path d="M2 15 V8 L5 6 V15 M6 15 V5 L10 3 V15 M11 15 V7 L14 9 V15" fill="#e6e6e6" stroke="#aaa"/><circle cx="11" cy="4" r="2.500" fill="#eee" stroke="#aaa"/></svg>
<div class="r" style="left:545px;top:756px;width:183px;height:16px;background:#fff;"></div>
<svg class="r" style="left:716px;top:761px;" width="10" height="7" viewBox="0 0 10 7"><path d="M1 1 L5 5 L9 1" fill="none" stroke="#bbb" stroke-width="1.200"/></svg>
<svg class="r" style="left:736px;top:756px;" width="16" height="16" viewBox="0 0 16 16"><path d="M4 2 H13 L9 7 V9 L6 14 H1 L6 8 Z" fill="#e4e4e4" stroke="#999"/></svg>
<span class="t" style="left:754px;top:758.6px;font-size:12px;line-height:14px;color:#222;transform:scaleX(0.8994);">:0</span>
<svg class="r" style="left:783px;top:756px;" width="16" height="16" viewBox="0 0 16 16"><rect x="1.500" y="1.500" width="13" height="13" rx="1.500" fill="#fff" stroke="#222" stroke-width="1.500"/><path d="M6 5 H13 M6 8.500 H13 M6 12 H13" stroke="#222" stroke-width="1.300"/><path d="M3 5 H4.500 M3 8.500 H4.500 M3 12 H4.500" stroke="#222" stroke-width="1.500"/></svg>
<svg class="r" style="left:808px;top:756px;" width="16" height="16" viewBox="0 0 16 16"><rect x="1" y="1" width="14" height="14" fill="#b9b9b9"/><rect x="3" y="3" width="7" height="10" fill="#d8d8d8"/><path d="M8 12 L13 7" stroke="#888" stroke-width="1.500"/></svg>
<div class="r" style="left:829px;top:756px;width:184px;height:16px;background:#fff;"></div>
<span class="t" style="left:832px;top:757.6px;font-size:12px;line-height:14px;color:#777;transform:scaleX(0.8733);">Modelo base</span>
<svg class="r" style="left:1001px;top:761px;" width="10" height="7" viewBox="0 0 10 7"><path d="M1 1 L5 5 L9 1" fill="none" stroke="#999" stroke-width="1.200"/></svg>
<svg class="r" style="left:1220px;top:755px;" width="18" height="18" viewBox="0 0 18 18"><ellipse cx="6" cy="6" rx="4.500" ry="3" fill="none" stroke="#e0a800" stroke-width="2"/><ellipse cx="11" cy="6" rx="4.500" ry="3" fill="none" stroke="#e0a800" stroke-width="2"/><path d="M8 7 v8 l2 -2 l1.500 3 l1.200 -.500 l-1.400 -3 h2.600 z" fill="#fff" stroke="#222" stroke-width=".9"/></svg>
<svg class="r" style="left:1242px;top:755px;" width="18" height="18" viewBox="0 0 18 18"><path d="M2 12 L10 4 V12 Z M2 14 H10" fill="#cfe4f5" stroke="#2a6fad" stroke-width="1.200"/><path d="M10 2 L15 7 M15 2 L10 7" stroke="#d42020" stroke-width="1.800"/><path d="M10 8 v8 l2 -2 l1.500 3 l1.200 -.500 l-1.400 -3 h2.600 z" fill="#fff" stroke="#222" stroke-width=".9"/></svg>
<svg class="r" style="left:1265px;top:755px;" width="18" height="18" viewBox="0 0 18 18"><path d="M4 2 H11 V6 H13 V9 H2 V6 H4 Z" fill="#f4a460" stroke="#b5651d"/><path d="M7.500 9 V15" stroke="#b5651d" stroke-width="1.500"/><path d="M10 8 v8 l2 -2 l1.500 3 l1.200 -.500 l-1.400 -3 h2.600 z" fill="#fff" stroke="#222" stroke-width=".9"/></svg>
<svg class="r" style="left:1288px;top:755px;" width="18" height="18" viewBox="0 0 18 18"><path d="M3 4 L9 2 V14 L3 15 Z" fill="#cfe4f5" stroke="#2a6fad" stroke-width="1.200"/><path d="M10 2 L15 7 M15 2 L10 7" stroke="#d42020" stroke-width="1.800"/><path d="M10 8 v8 l2 -2 l1.500 3 l1.200 -.500 l-1.400 -3 h2.600 z" fill="#fff" stroke="#222" stroke-width=".9"/></svg>
<svg class="r" style="left:1312px;top:755px;" width="18" height="18" viewBox="0 0 18 18"><path d="M6 1 V11 M1 6 H11 M6 1 L4.500 3 M6 1 L7.500 3 M6 11 L4.500 9 M6 11 L7.500 9 M1 6 L3 4.500 M1 6 L3 7.500 M11 6 L9 4.500 M11 6 L9 7.500" stroke="#111" stroke-width="1.200" fill="none"/><path d="M9 7 v8 l2 -2 l1.500 3 l1.200 -.500 l-1.400 -3 h2.600 z" fill="#fff" stroke="#222" stroke-width=".9"/></svg>
<svg class="r" style="left:1336px;top:756px;" width="16" height="16" viewBox="0 0 16 16"><circle cx="8" cy="8" r="5.500" fill="none" stroke="#bdbdbd" stroke-width="2.500" stroke-dasharray="2.500 1.500"/></svg>
<svg class="r" style="left:1356px;top:756px;" width="18" height="16" viewBox="0 0 18 16"><path d="M1.500 2 H15.500 L10 8.500 V14 L7 12 V8.500 Z" fill="#ececec" stroke="#777" stroke-width="1.300"/></svg>
<span class="t" style="left:1373.5px;top:758.6px;font-size:12px;line-height:14px;color:#333;transform:scaleX(0.7995);">:0</span>
<div class="r" style="left:0px;top:774px;width:1440px;height:36px;background:#1f1f1f;"></div>
<div class="r" style="left:43.5px;top:774px;width:309.5px;height:35.5px;background:#f2f2f2;"></div>
<svg class="r" style="left:13.5px;top:784.5px;" width="16" height="15" viewBox="0 0 16 15"><path d="M0 2 L7 1 V7 H0 Z M8 .900 L15.500 0 V7 H8 Z M0 8 H7 V14 L0 13 Z M8 8 H15.500 V15 L8 14.100 Z" fill="#fff"/></svg>
<svg class="r" style="left:54px;top:783px;" width="18" height="18" viewBox="0 0 18 18"><circle cx="10.500" cy="7" r="5.500" fill="none" stroke="#222" stroke-width="1.500"/><path d="M6.500 11 L1.500 16.500" stroke="#222" stroke-width="1.700"/></svg>
<span class="t" style="left:79px;top:783.8px;font-size:15px;line-height:17px;color:#4a4a4a;transform:scaleX(0.8696);">Escribe aquí para buscar</span>
<svg class="r" style="left:365px;top:784px;" width="18" height="17" viewBox="0 0 18 17"><rect x="1" y="4" width="10" height="9" fill="none" stroke="#fff" stroke-width="1.400"/><path d="M1 1 H11 M1 16 H11" stroke="#fff" stroke-width="1.400"/><path d="M14.500 1 V4 M14.500 6.500 V10.500 M14.500 13 V16" stroke="#fff" stroke-width="1.600"/></svg>
<svg class="r" style="left:408px;top:780px;" width="24" height="24" viewBox="0 0 24 24"><circle cx="12" cy="12" r="11" fill="#1b7fd0"/><path d="M2 14 Q1 3 12 1.500 Q22 2 23 11 Q18 5 12 7 Q6 9 7 15 Q4 17 2 14Z" fill="#35c1e8"/><path d="M7 15 Q6 22 14 23 Q8 19 10 14 Q11 11 15 12 Q13 8 9 10 Z" fill="#0d4a94"/><path d="M3 17 Q8 25 18 21 Q12 22 9 17Z" fill="#4ed46a"/></svg>
<svg class="r" style="left:452px;top:781px;" width="24" height="22" viewBox="0 0 24 22"><path d="M1 3 H9 L11 5.500 H23 V20 H1 Z" fill="#f5b82e"/><rect x="1" y="7.500" width="22" height="12.500" fill="#fcd462"/><rect x="7" y="13" width="10" height="7" fill="#3a8ee0"/><rect x="9.500" y="16" width="5" height="4" fill="#fcd462"/></svg>
<svg class="r" style="left:495px;top:781px;" width="26" height="22" viewBox="0 0 26 22"><path d="M1 8 L13 0 L25 8 V21 H1 Z" fill="#1378d4"/><path d="M1 8 L13 16 L25 8 V21 H1 Z" fill="#3aa3f2"/><path d="M3 8 H23 L13 15 Z" fill="#fff"/></svg>
<svg class="r" style="left:540px;top:780px;" width="24" height="24" viewBox="0 0 24 24"><circle cx="12" cy="12" r="11" fill="#e33b2e"/><path d="M12 12 L2.500 6.500 A11 11 0 0 0 7 21.800 Z" fill="#2da94f"/><path d="M12 12 L7 21.800 A11 11 0 0 0 22.500 8.500 L12 8.500Z" fill="#fdd21b"/><path d="M2.500 6.500 A11 11 0 0 1 22.700 8.500 H12 Z" fill="#e33b2e"/><circle cx="12" cy="12" r="5" fill="#fff"/><circle cx="12" cy="12" r="3.900" fill="#4285f4"/></svg>
<svg class="r" style="left:585px;top:781px;" width="24" height="22" viewBox="0 0 24 22"><rect x="9" y="1.500" width="14" height="19" fill="#fff" stroke="#1f7a46" stroke-width="1"/><path d="M11 5 H21 M11 8.500 H21 M11 12 H21 M11 15.500 H21" stroke="#1f7a46" stroke-width="1.600"/><path d="M1 2.500 L14 0 V22 L1 19.500 Z" fill="#1d6f42"/></svg>
<span class="t" style="left:588.5px;top:785.6px;font-size:12px;line-height:14px;color:#fff;font-weight:bold;">X</span>
<svg class="r" style="left:629px;top:781px;" width="24" height="22" viewBox="0 0 24 22"><rect x="9" y="1.500" width="14" height="19" fill="#fff" stroke="#2b5eb8" stroke-width="1"/><path d="M11 5 H21 M11 8.500 H21 M11 12 H21 M11 15.500 H21" stroke="#2b5eb8" stroke-width="1.600"/><path d="M1 2.500 L14 0 V22 L1 19.500 Z" fill="#2a579a"/></svg>
<span class="t" style="left:632.5px;top:785.6px;font-size:12px;line-height:14px;color:#fff;transform:scaleX(0.7063);font-weight:bold;">W</span>
<svg class="r" style="left:673px;top:781px;" width="24" height="22" viewBox="0 0 24 22"><rect x="9" y="1.500" width="14" height="19" fill="#fff" stroke="#d04a27" stroke-width="1"/><path d="M11 5 H21 M11 8.500 H21 M11 12 H21 M11 15.500 H21" stroke="#d04a27" stroke-width="1.600"/><path d="M1 2.500 L14 0 V22 L1 19.500 Z" fill="#c8421f"/></svg>
<span class="t" style="left:676.5px;top:785.6px;font-size:12px;line-height:14px;color:#fff;font-weight:bold;">P</span>
<svg class="r" style="left:718px;top:781px;" width="23" height="23" viewBox="0 0 23 23"><rect x="0" y="0" width="23" height="23" fill="#f7e4e0"/></svg>
<span class="t" style="left:721px;top:781.2px;font-size:24px;line-height:26px;color:#c8202a;transform:scaleX(0.9808);font-weight:bold;">A</span>
<div class="r" style="left:751px;top:774px;width:45px;height:36px;background:#4b4b4b;"></div>
<svg class="r" style="left:762px;top:781px;" width="23" height="23" viewBox="0 0 23 23"><rect x="0" y="0" width="23" height="23" fill="#e6eef8"/><path d="M5 3 H12 Q18 3 18 8.500 Q18 12.500 14 13.300 L19 21 H14.500 L10.500 14 V21 H5 Z M10 6.500 V11 H12 Q14 11 14 8.700 Q14 6.500 12 6.500 Z" fill="#2b6cb0"/><path d="M5 3 H10 V21 H5Z" fill="#1d4e89"/></svg>
<svg class="r" style="left:805px;top:781px;" width="24" height="23" viewBox="0 0 24 23"><path d="M1 22 L12 1 L17 1 L9 17 L17 17 L19 22 Z" fill="#2fa56a"/><path d="M12 1 L17 1 L23 22 L18 22 Z" fill="#1b8fd6"/><path d="M1 22 L9 17 L17 17 L19 22 Z" fill="#157a58"/></svg>
<svg class="r" style="left:849px;top:779px;" width="24" height="25" viewBox="0 0 24 25"><path d="M7 7 V4.500 Q7 1.500 12 1.500 Q17 1.500 17 4.500 V7" fill="none" stroke="#fff" stroke-width="1.800"/><rect x="1.500" y="7" width="21" height="17" rx="1.500" fill="#fff"/><rect x="7" y="11" width="4.300" height="4.300" fill="#f25022"/><rect x="12.500" y="11" width="4.300" height="4.300" fill="#7fba00"/><rect x="7" y="16.500" width="4.300" height="4.300" fill="#00a4ef"/><rect x="12.500" y="16.500" width="4.300" height="4.300" fill="#ffb900"/></svg>
<div class="r" style="left:447px;top:808px;width:35px;height:2px;background:#76b9ed;"></div>
<div class="r" style="left:535px;top:808px;width:35px;height:2px;background:#76b9ed;"></div>
<div class="r" style="left:623px;top:808px;width:35px;height:2px;background:#76b9ed;"></div>
<div class="r" style="left:711px;top:808px;width:36px;height:2px;background:#76b9ed;"></div>
<div class="r" style="left:751px;top:808px;width:45px;height:2px;background:#76b9ed;"></div>
<svg class="r" style="left:1111px;top:783px;" width="22" height="18" viewBox="0 0 22 18"><circle cx="7" cy="6" r="4.500" fill="#f6c544"/><path d="M5 16 Q1.500 16 1.500 12.500 Q1.500 9.500 5 9.500 Q6 5.500 10.500 5.500 Q15 5.500 16 9 Q20.500 9 20.500 12.500 Q20.500 16 17 16 Z" fill="#dfe9f5"/><path d="M11 10 L9.300 13 Q9.300 14.600 11 14.600 Q12.700 14.600 12.700 13 Z" fill="#3a8ee0"/></svg>
<span class="t" style="left:1139.5px;top:785.2px;font-size:15px;line-height:17px;color:#fff;transform:scaleX(0.7758);">25°C</span>
<span class="t" style="left:1173.5px;top:785.2px;font-size:15px;line-height:17px;color:#fff;transform:scaleX(0.7996);">Chubascos</span>
<svg class="r" style="left:1247px;top:787px;" width="14" height="9" viewBox="0 0 14 9"><path d="M1.500 7.500 L7 2 L12.500 7.500" fill="none" stroke="#fff" stroke-width="1.500"/></svg>
<svg class="r" style="left:1268.5px;top:783.5px;" width="15" height="16" viewBox="0 0 16 17"><rect x="2" y="3" width="10" height="11" rx="3" fill="none" stroke="#fff" stroke-width="1.300"/><circle cx="7" cy="8.500" r="2" fill="none" stroke="#fff" stroke-width="1.200"/><path d="M12 7 L15 5.500 V11.500 L12 10" fill="none" stroke="#fff" stroke-width="1.200"/><path d="M4 1 H10 M4 16 H10" stroke="#fff" stroke-width="1.200"/></svg>
<svg class="r" style="left:1289.5px;top:784.5px;" width="16" height="15" viewBox="0 0 17 16"><rect x="4" y="2" width="12" height="8" fill="none" stroke="#fff" stroke-width="1.300"/><path d="M10 10 V13.500 M6 14 H14" stroke="#fff" stroke-width="1.300"/><rect x="1" y="1" width="4" height="5" fill="#1f1f1f" stroke="#fff" stroke-width="1.100"/><path d="M3 6 V12 H5" fill="none" stroke="#fff" stroke-width="1.100"/></svg>
<svg class="r" style="left:1311px;top:784.5px;" width="17" height="15" viewBox="0 0 18 16"><path d="M1.500 5.500 H4.500 L8.500 2 V14 L4.500 10.500 H1.500 Z" fill="none" stroke="#fff" stroke-width="1.200"/><path d="M10.500 5.500 Q12 8 10.500 10.500 M12.500 3.500 Q15.500 8 12.500 12.500 M14.500 2 Q18.500 8 14.500 14" fill="none" stroke="#fff" stroke-width="1.100"/></svg>
<span class="t" style="left:1335.5px;top:777.6px;font-size:12px;line-height:14px;color:#fff;transform:scaleX(0.8455);">11:51 a. m.</span>
<span class="t" style="left:1336px;top:794.1px;font-size:12px;line-height:14px;color:#fff;transform:scaleX(0.8326);">14/09/2021</span>
<svg class="r" style="left:1402px;top:783px;" width="24" height="22" viewBox="0 0 24 22"><path d="M1.500 1.500 H16.500 V13 H6 L1.500 17 Z" fill="#fff"/><path d="M4 5 H14 M4 8 H14 M4 11 H10" stroke="#1f1f1f" stroke-width="1.200"/><circle cx="16" cy="15" r="5.500" fill="#1f1f1f" stroke="#ddd" stroke-width="1.200"/></svg>
<span class="t" style="left:1415.8px;top:792.5px;font-size:10px;line-height:12px;color:#fff;transform:scaleX(0.8092);font-weight:bold;">1</span>
<div class="r" style="left:1435px;top:774px;width:1px;height:36px;background:#5a5a5a;"></div>
</body></html>
